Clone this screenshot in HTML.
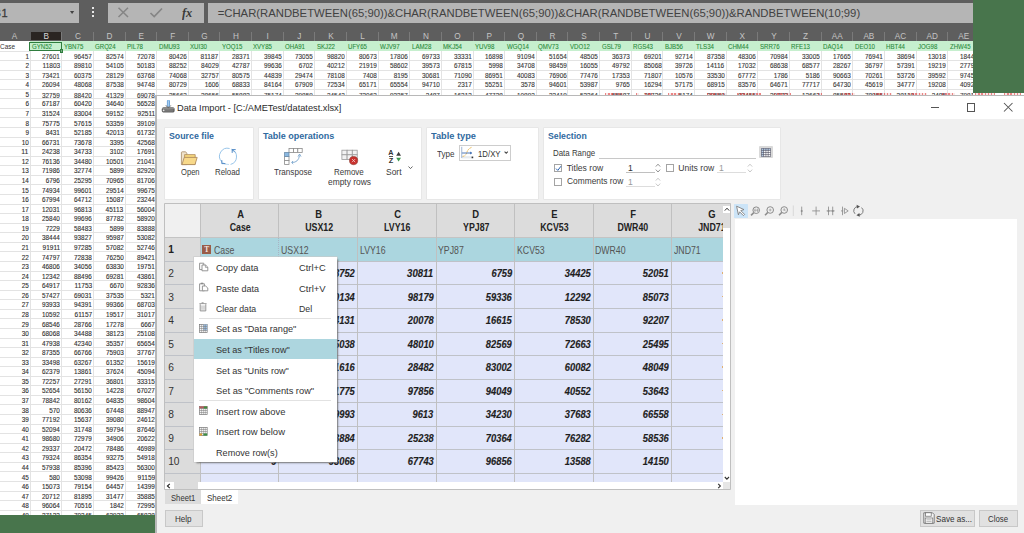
<!DOCTYPE html><html><head><meta charset='utf-8'><style>*{margin:0;padding:0}
html,body{width:1024px;height:533px;overflow:hidden;background:#fff}
body{position:relative;font-family:'Liberation Sans',sans-serif}
body>div,body>span,body>svg{position:absolute}
.t{white-space:nowrap;line-height:0;display:block}
</style></head><body><div style='left:0.00px;top:0.00px;width:973.00px;height:41.40px;background:#5e5e5e;'></div>
<div style='left:0.00px;top:3.00px;width:79.40px;height:20.00px;background:#b5b5b5;'></div>
<span class='t' style='top:13.49px;font-size:11px;color:#3a3a3a;left:1.50px;-webkit-text-stroke:0.3px #3a3a3a;'>1</span>
<span class='t' style='top:13.49px;font-size:11px;color:#3a3a3a;left:-6.34px;'>B</span>
<svg style='left:69.6px;top:11.2px' width='5' height='4'><path d='M0 0 L4.2 0 L2.1 3Z' fill='#444'/></svg>
<div style='left:92.00px;top:7.20px;width:2.20px;height:2.00px;background:#e8e8e8;'></div>
<div style='left:92.00px;top:10.90px;width:2.20px;height:2.00px;background:#e8e8e8;'></div>
<div style='left:92.00px;top:14.60px;width:2.20px;height:2.00px;background:#e8e8e8;'></div>
<div style='left:107.50px;top:2.90px;width:96.50px;height:20.00px;background:#b5b5b5;'></div>
<svg style='left:117px;top:7px' width='13' height='11'><path d='M1.5 0.8 L11 10 M11 0.8 L1.5 10' stroke='#858585' stroke-width='1.5' fill='none'/></svg>
<svg style='left:149px;top:7px' width='15' height='11'><path d='M1.5 6 L5.2 9.6 L13 1.5' stroke='#858585' stroke-width='1.7' fill='none'/></svg>
<span class='t' style='top:12.82px;font-size:11.5px;color:#3a3a3a;font-weight:bold;font-style:italic;left:182.30px;transform:scaleX(1.076);transform-origin:left;font-family:Liberation Serif,serif;'>fx</span>
<div style='left:207.50px;top:2.90px;width:765.50px;height:20.00px;background:#b5b5b5;'></div>
<span class='t' style='top:13.18px;font-size:11.3px;color:#424242;left:217.70px;'>=CHAR(RANDBETWEEN(65;90))&amp;CHAR(RANDBETWEEN(65;90))&amp;CHAR(RANDBETWEEN(65;90))&amp;RANDBETWEEN(10;99)</span>
<div style='left:30.90px;top:32.20px;width:30.00px;height:8.30px;background:#2a2522;'></div>
<div style='left:30.90px;top:40.50px;width:30.00px;height:0.90px;background:#8a8a8a;'></div>
<span class='t' style='top:37.16px;font-size:8.2px;color:#c4c4c4;left:11.87px;'>A</span>
<span class='t' style='top:37.16px;font-size:8.2px;color:#d8d8d8;left:43.49px;'>B</span>
<div style='left:61.24px;top:32.20px;width:1.00px;height:9.20px;background:#7a7a7a;'></div>
<span class='t' style='top:37.16px;font-size:8.2px;color:#c4c4c4;left:74.90px;'>C</span>
<div style='left:92.88px;top:32.20px;width:1.00px;height:9.20px;background:#7a7a7a;'></div>
<span class='t' style='top:37.16px;font-size:8.2px;color:#c4c4c4;left:106.54px;'>D</span>
<div style='left:124.52px;top:32.20px;width:1.00px;height:9.20px;background:#7a7a7a;'></div>
<span class='t' style='top:37.16px;font-size:8.2px;color:#c4c4c4;left:138.41px;'>E</span>
<div style='left:156.16px;top:32.20px;width:1.00px;height:9.20px;background:#7a7a7a;'></div>
<span class='t' style='top:37.16px;font-size:8.2px;color:#c4c4c4;left:170.28px;'>F</span>
<div style='left:187.80px;top:32.20px;width:1.00px;height:9.20px;background:#7a7a7a;'></div>
<span class='t' style='top:37.16px;font-size:8.2px;color:#c4c4c4;left:201.23px;'>G</span>
<div style='left:219.44px;top:32.20px;width:1.00px;height:9.20px;background:#7a7a7a;'></div>
<span class='t' style='top:37.16px;font-size:8.2px;color:#c4c4c4;left:233.10px;'>H</span>
<div style='left:251.08px;top:32.20px;width:1.00px;height:9.20px;background:#7a7a7a;'></div>
<span class='t' style='top:37.16px;font-size:8.2px;color:#c4c4c4;left:266.56px;'>I</span>
<div style='left:282.72px;top:32.20px;width:1.00px;height:9.20px;background:#7a7a7a;'></div>
<span class='t' style='top:37.16px;font-size:8.2px;color:#c4c4c4;left:297.29px;'>J</span>
<div style='left:314.36px;top:32.20px;width:1.00px;height:9.20px;background:#7a7a7a;'></div>
<span class='t' style='top:37.16px;font-size:8.2px;color:#c4c4c4;left:328.25px;'>K</span>
<div style='left:346.00px;top:32.20px;width:1.00px;height:9.20px;background:#7a7a7a;'></div>
<span class='t' style='top:37.16px;font-size:8.2px;color:#c4c4c4;left:360.34px;'>L</span>
<div style='left:377.64px;top:32.20px;width:1.00px;height:9.20px;background:#7a7a7a;'></div>
<span class='t' style='top:37.16px;font-size:8.2px;color:#c4c4c4;left:390.84px;'>M</span>
<div style='left:409.28px;top:32.20px;width:1.00px;height:9.20px;background:#7a7a7a;'></div>
<span class='t' style='top:37.16px;font-size:8.2px;color:#c4c4c4;left:422.94px;'>N</span>
<div style='left:440.92px;top:32.20px;width:1.00px;height:9.20px;background:#7a7a7a;'></div>
<span class='t' style='top:37.16px;font-size:8.2px;color:#c4c4c4;left:454.35px;'>O</span>
<div style='left:472.56px;top:32.20px;width:1.00px;height:9.20px;background:#7a7a7a;'></div>
<span class='t' style='top:37.16px;font-size:8.2px;color:#c4c4c4;left:486.45px;'>P</span>
<div style='left:504.20px;top:32.20px;width:1.00px;height:9.20px;background:#7a7a7a;'></div>
<span class='t' style='top:37.16px;font-size:8.2px;color:#c4c4c4;left:517.63px;'>Q</span>
<div style='left:535.84px;top:32.20px;width:1.00px;height:9.20px;background:#7a7a7a;'></div>
<span class='t' style='top:37.16px;font-size:8.2px;color:#c4c4c4;left:549.50px;'>R</span>
<div style='left:567.48px;top:32.20px;width:1.00px;height:9.20px;background:#7a7a7a;'></div>
<span class='t' style='top:37.16px;font-size:8.2px;color:#c4c4c4;left:581.37px;'>S</span>
<div style='left:599.12px;top:32.20px;width:1.00px;height:9.20px;background:#7a7a7a;'></div>
<span class='t' style='top:37.16px;font-size:8.2px;color:#c4c4c4;left:613.24px;'>T</span>
<div style='left:630.76px;top:32.20px;width:1.00px;height:9.20px;background:#7a7a7a;'></div>
<span class='t' style='top:37.16px;font-size:8.2px;color:#c4c4c4;left:644.42px;'>U</span>
<div style='left:662.40px;top:32.20px;width:1.00px;height:9.20px;background:#7a7a7a;'></div>
<span class='t' style='top:37.16px;font-size:8.2px;color:#c4c4c4;left:676.29px;'>V</span>
<div style='left:694.04px;top:32.20px;width:1.00px;height:9.20px;background:#7a7a7a;'></div>
<span class='t' style='top:37.16px;font-size:8.2px;color:#c4c4c4;left:706.79px;'>W</span>
<div style='left:725.68px;top:32.20px;width:1.00px;height:9.20px;background:#7a7a7a;'></div>
<span class='t' style='top:37.16px;font-size:8.2px;color:#c4c4c4;left:739.57px;'>X</span>
<div style='left:757.32px;top:32.20px;width:1.00px;height:9.20px;background:#7a7a7a;'></div>
<span class='t' style='top:37.16px;font-size:8.2px;color:#c4c4c4;left:771.21px;'>Y</span>
<div style='left:788.96px;top:32.20px;width:1.00px;height:9.20px;background:#7a7a7a;'></div>
<span class='t' style='top:37.16px;font-size:8.2px;color:#c4c4c4;left:803.08px;'>Z</span>
<div style='left:820.60px;top:32.20px;width:1.00px;height:9.20px;background:#7a7a7a;'></div>
<span class='t' style='top:37.16px;font-size:8.2px;color:#c4c4c4;left:831.75px;'>AA</span>
<div style='left:852.24px;top:32.20px;width:1.00px;height:9.20px;background:#7a7a7a;'></div>
<span class='t' style='top:37.16px;font-size:8.2px;color:#c4c4c4;left:863.39px;'>AB</span>
<div style='left:883.88px;top:32.20px;width:1.00px;height:9.20px;background:#7a7a7a;'></div>
<span class='t' style='top:37.16px;font-size:8.2px;color:#c4c4c4;left:894.80px;'>AC</span>
<div style='left:915.52px;top:32.20px;width:1.00px;height:9.20px;background:#7a7a7a;'></div>
<span class='t' style='top:37.16px;font-size:8.2px;color:#c4c4c4;left:926.44px;'>AD</span>
<div style='left:947.16px;top:32.20px;width:1.00px;height:9.20px;background:#7a7a7a;'></div>
<span class='t' style='top:37.16px;font-size:8.2px;color:#c4c4c4;left:958.31px;'>AE</span>
<div style='left:978.80px;top:32.20px;width:1.00px;height:9.20px;background:#7a7a7a;'></div>
<div style='left:0.00px;top:41.40px;width:973.00px;height:473.30px;background:#ffffff;'></div>
<div style='left:30.10px;top:41.40px;width:942.90px;height:9.60px;background:#c6efce;'></div>
<span class='t' style='top:46.81px;font-size:7.2px;color:#333;left:0.20px;transform:scaleX(0.892);transform-origin:left;'>Case</span>
<span class='t' style='top:46.84px;font-size:7.4px;color:#2a8a3a;left:32.00px;transform:scaleX(0.824);transform-origin:left;-webkit-text-stroke:0.1px #2a8a3a;'>GYN52</span>
<span class='t' style='top:46.84px;font-size:7.4px;color:#2a8a3a;left:63.64px;transform:scaleX(0.824);transform-origin:left;-webkit-text-stroke:0.1px #2a8a3a;'>YBN75</span>
<span class='t' style='top:46.84px;font-size:7.4px;color:#2a8a3a;left:95.28px;transform:scaleX(0.824);transform-origin:left;-webkit-text-stroke:0.1px #2a8a3a;'>GRQ24</span>
<span class='t' style='top:46.84px;font-size:7.4px;color:#2a8a3a;left:126.92px;transform:scaleX(0.824);transform-origin:left;-webkit-text-stroke:0.1px #2a8a3a;'>PIL78</span>
<span class='t' style='top:46.84px;font-size:7.4px;color:#2a8a3a;left:158.56px;transform:scaleX(0.824);transform-origin:left;-webkit-text-stroke:0.1px #2a8a3a;'>DMU93</span>
<span class='t' style='top:46.84px;font-size:7.4px;color:#2a8a3a;left:190.20px;transform:scaleX(0.824);transform-origin:left;-webkit-text-stroke:0.1px #2a8a3a;'>XUI30</span>
<span class='t' style='top:46.84px;font-size:7.4px;color:#2a8a3a;left:221.84px;transform:scaleX(0.824);transform-origin:left;-webkit-text-stroke:0.1px #2a8a3a;'>YOQ15</span>
<span class='t' style='top:46.84px;font-size:7.4px;color:#2a8a3a;left:253.48px;transform:scaleX(0.824);transform-origin:left;-webkit-text-stroke:0.1px #2a8a3a;'>XVY85</span>
<span class='t' style='top:46.84px;font-size:7.4px;color:#2a8a3a;left:285.12px;transform:scaleX(0.824);transform-origin:left;-webkit-text-stroke:0.1px #2a8a3a;'>OHA91</span>
<span class='t' style='top:46.84px;font-size:7.4px;color:#2a8a3a;left:316.76px;transform:scaleX(0.824);transform-origin:left;-webkit-text-stroke:0.1px #2a8a3a;'>SKJ22</span>
<span class='t' style='top:46.84px;font-size:7.4px;color:#2a8a3a;left:348.40px;transform:scaleX(0.824);transform-origin:left;-webkit-text-stroke:0.1px #2a8a3a;'>UFY65</span>
<span class='t' style='top:46.84px;font-size:7.4px;color:#2a8a3a;left:380.04px;transform:scaleX(0.824);transform-origin:left;-webkit-text-stroke:0.1px #2a8a3a;'>WJV97</span>
<span class='t' style='top:46.84px;font-size:7.4px;color:#2a8a3a;left:411.68px;transform:scaleX(0.824);transform-origin:left;-webkit-text-stroke:0.1px #2a8a3a;'>LAM28</span>
<span class='t' style='top:46.84px;font-size:7.4px;color:#2a8a3a;left:443.32px;transform:scaleX(0.824);transform-origin:left;-webkit-text-stroke:0.1px #2a8a3a;'>MKJ54</span>
<span class='t' style='top:46.84px;font-size:7.4px;color:#2a8a3a;left:474.96px;transform:scaleX(0.824);transform-origin:left;-webkit-text-stroke:0.1px #2a8a3a;'>YUV98</span>
<span class='t' style='top:46.84px;font-size:7.4px;color:#2a8a3a;left:506.60px;transform:scaleX(0.824);transform-origin:left;-webkit-text-stroke:0.1px #2a8a3a;'>WGQ14</span>
<span class='t' style='top:46.84px;font-size:7.4px;color:#2a8a3a;left:538.24px;transform:scaleX(0.824);transform-origin:left;-webkit-text-stroke:0.1px #2a8a3a;'>QMV73</span>
<span class='t' style='top:46.84px;font-size:7.4px;color:#2a8a3a;left:569.88px;transform:scaleX(0.824);transform-origin:left;-webkit-text-stroke:0.1px #2a8a3a;'>VDO12</span>
<span class='t' style='top:46.84px;font-size:7.4px;color:#2a8a3a;left:601.52px;transform:scaleX(0.824);transform-origin:left;-webkit-text-stroke:0.1px #2a8a3a;'>GSL79</span>
<span class='t' style='top:46.84px;font-size:7.4px;color:#2a8a3a;left:633.16px;transform:scaleX(0.824);transform-origin:left;-webkit-text-stroke:0.1px #2a8a3a;'>RGS43</span>
<span class='t' style='top:46.84px;font-size:7.4px;color:#2a8a3a;left:664.80px;transform:scaleX(0.824);transform-origin:left;-webkit-text-stroke:0.1px #2a8a3a;'>BJB56</span>
<span class='t' style='top:46.84px;font-size:7.4px;color:#2a8a3a;left:696.44px;transform:scaleX(0.824);transform-origin:left;-webkit-text-stroke:0.1px #2a8a3a;'>TLS34</span>
<span class='t' style='top:46.84px;font-size:7.4px;color:#2a8a3a;left:728.08px;transform:scaleX(0.824);transform-origin:left;-webkit-text-stroke:0.1px #2a8a3a;'>CHM44</span>
<span class='t' style='top:46.84px;font-size:7.4px;color:#2a8a3a;left:759.72px;transform:scaleX(0.824);transform-origin:left;-webkit-text-stroke:0.1px #2a8a3a;'>SRR76</span>
<span class='t' style='top:46.84px;font-size:7.4px;color:#2a8a3a;left:791.36px;transform:scaleX(0.824);transform-origin:left;-webkit-text-stroke:0.1px #2a8a3a;'>RFE13</span>
<span class='t' style='top:46.84px;font-size:7.4px;color:#2a8a3a;left:823.00px;transform:scaleX(0.824);transform-origin:left;-webkit-text-stroke:0.1px #2a8a3a;'>DAQ14</span>
<span class='t' style='top:46.84px;font-size:7.4px;color:#2a8a3a;left:854.64px;transform:scaleX(0.824);transform-origin:left;-webkit-text-stroke:0.1px #2a8a3a;'>DEO10</span>
<span class='t' style='top:46.84px;font-size:7.4px;color:#2a8a3a;left:886.28px;transform:scaleX(0.824);transform-origin:left;-webkit-text-stroke:0.1px #2a8a3a;'>HBT44</span>
<span class='t' style='top:46.84px;font-size:7.4px;color:#2a8a3a;left:917.92px;transform:scaleX(0.824);transform-origin:left;-webkit-text-stroke:0.1px #2a8a3a;'>JOG98</span>
<span class='t' style='top:46.84px;font-size:7.4px;color:#2a8a3a;left:949.56px;transform:scaleX(0.824);transform-origin:left;-webkit-text-stroke:0.1px #2a8a3a;'>ZHW45</span>
<div style='left:0.00px;top:60.07px;width:973.00px;height:1.00px;background:#e3e3e3;'></div>
<div style='left:0.00px;top:69.63px;width:973.00px;height:1.00px;background:#e3e3e3;'></div>
<div style='left:0.00px;top:79.20px;width:973.00px;height:1.00px;background:#e3e3e3;'></div>
<div style='left:0.00px;top:88.77px;width:973.00px;height:1.00px;background:#e3e3e3;'></div>
<div style='left:0.00px;top:98.34px;width:155.00px;height:1.00px;background:#e3e3e3;'></div>
<div style='left:0.00px;top:107.90px;width:155.00px;height:1.00px;background:#e3e3e3;'></div>
<div style='left:0.00px;top:117.47px;width:155.00px;height:1.00px;background:#e3e3e3;'></div>
<div style='left:0.00px;top:127.04px;width:155.00px;height:1.00px;background:#e3e3e3;'></div>
<div style='left:0.00px;top:136.60px;width:155.00px;height:1.00px;background:#e3e3e3;'></div>
<div style='left:0.00px;top:146.17px;width:155.00px;height:1.00px;background:#e3e3e3;'></div>
<div style='left:0.00px;top:155.74px;width:155.00px;height:1.00px;background:#e3e3e3;'></div>
<div style='left:0.00px;top:165.30px;width:155.00px;height:1.00px;background:#e3e3e3;'></div>
<div style='left:0.00px;top:174.87px;width:155.00px;height:1.00px;background:#e3e3e3;'></div>
<div style='left:0.00px;top:184.44px;width:155.00px;height:1.00px;background:#e3e3e3;'></div>
<div style='left:0.00px;top:194.00px;width:155.00px;height:1.00px;background:#e3e3e3;'></div>
<div style='left:0.00px;top:203.57px;width:155.00px;height:1.00px;background:#e3e3e3;'></div>
<div style='left:0.00px;top:213.14px;width:155.00px;height:1.00px;background:#e3e3e3;'></div>
<div style='left:0.00px;top:222.71px;width:155.00px;height:1.00px;background:#e3e3e3;'></div>
<div style='left:0.00px;top:232.27px;width:155.00px;height:1.00px;background:#e3e3e3;'></div>
<div style='left:0.00px;top:241.84px;width:155.00px;height:1.00px;background:#e3e3e3;'></div>
<div style='left:0.00px;top:251.41px;width:155.00px;height:1.00px;background:#e3e3e3;'></div>
<div style='left:0.00px;top:260.97px;width:155.00px;height:1.00px;background:#e3e3e3;'></div>
<div style='left:0.00px;top:270.54px;width:155.00px;height:1.00px;background:#e3e3e3;'></div>
<div style='left:0.00px;top:280.11px;width:155.00px;height:1.00px;background:#e3e3e3;'></div>
<div style='left:0.00px;top:289.68px;width:155.00px;height:1.00px;background:#e3e3e3;'></div>
<div style='left:0.00px;top:299.24px;width:155.00px;height:1.00px;background:#e3e3e3;'></div>
<div style='left:0.00px;top:308.81px;width:155.00px;height:1.00px;background:#e3e3e3;'></div>
<div style='left:0.00px;top:318.38px;width:155.00px;height:1.00px;background:#e3e3e3;'></div>
<div style='left:0.00px;top:327.94px;width:155.00px;height:1.00px;background:#e3e3e3;'></div>
<div style='left:0.00px;top:337.51px;width:155.00px;height:1.00px;background:#e3e3e3;'></div>
<div style='left:0.00px;top:347.08px;width:155.00px;height:1.00px;background:#e3e3e3;'></div>
<div style='left:0.00px;top:356.64px;width:155.00px;height:1.00px;background:#e3e3e3;'></div>
<div style='left:0.00px;top:366.21px;width:155.00px;height:1.00px;background:#e3e3e3;'></div>
<div style='left:0.00px;top:375.78px;width:155.00px;height:1.00px;background:#e3e3e3;'></div>
<div style='left:0.00px;top:385.35px;width:155.00px;height:1.00px;background:#e3e3e3;'></div>
<div style='left:0.00px;top:394.91px;width:155.00px;height:1.00px;background:#e3e3e3;'></div>
<div style='left:0.00px;top:404.48px;width:155.00px;height:1.00px;background:#e3e3e3;'></div>
<div style='left:0.00px;top:414.05px;width:155.00px;height:1.00px;background:#e3e3e3;'></div>
<div style='left:0.00px;top:423.61px;width:155.00px;height:1.00px;background:#e3e3e3;'></div>
<div style='left:0.00px;top:433.18px;width:155.00px;height:1.00px;background:#e3e3e3;'></div>
<div style='left:0.00px;top:442.75px;width:155.00px;height:1.00px;background:#e3e3e3;'></div>
<div style='left:0.00px;top:452.31px;width:155.00px;height:1.00px;background:#e3e3e3;'></div>
<div style='left:0.00px;top:461.88px;width:155.00px;height:1.00px;background:#e3e3e3;'></div>
<div style='left:0.00px;top:471.45px;width:155.00px;height:1.00px;background:#e3e3e3;'></div>
<div style='left:0.00px;top:481.01px;width:155.00px;height:1.00px;background:#e3e3e3;'></div>
<div style='left:0.00px;top:490.58px;width:155.00px;height:1.00px;background:#e3e3e3;'></div>
<div style='left:0.00px;top:500.15px;width:155.00px;height:1.00px;background:#e3e3e3;'></div>
<div style='left:0.00px;top:509.72px;width:155.00px;height:1.00px;background:#e3e3e3;'></div>
<div style='left:0.00px;top:50.50px;width:30.10px;height:1.00px;background:#e3e3e3;'></div>
<div style='left:29.60px;top:51.00px;width:1.00px;height:463.70px;background:#e3e3e3;'></div>
<div style='left:61.24px;top:51.00px;width:1.00px;height:463.70px;background:#e3e3e3;'></div>
<div style='left:92.88px;top:51.00px;width:1.00px;height:463.70px;background:#e3e3e3;'></div>
<div style='left:124.52px;top:51.00px;width:1.00px;height:463.70px;background:#e3e3e3;'></div>
<div style='left:156.16px;top:51.00px;width:1.00px;height:463.70px;background:#e3e3e3;'></div>
<div style='left:187.80px;top:51.00px;width:1.00px;height:463.70px;background:#e3e3e3;'></div>
<div style='left:219.44px;top:51.00px;width:1.00px;height:463.70px;background:#e3e3e3;'></div>
<div style='left:251.08px;top:51.00px;width:1.00px;height:463.70px;background:#e3e3e3;'></div>
<div style='left:282.72px;top:51.00px;width:1.00px;height:463.70px;background:#e3e3e3;'></div>
<div style='left:314.36px;top:51.00px;width:1.00px;height:463.70px;background:#e3e3e3;'></div>
<div style='left:346.00px;top:51.00px;width:1.00px;height:463.70px;background:#e3e3e3;'></div>
<div style='left:377.64px;top:51.00px;width:1.00px;height:463.70px;background:#e3e3e3;'></div>
<div style='left:409.28px;top:51.00px;width:1.00px;height:463.70px;background:#e3e3e3;'></div>
<div style='left:440.92px;top:51.00px;width:1.00px;height:463.70px;background:#e3e3e3;'></div>
<div style='left:472.56px;top:51.00px;width:1.00px;height:463.70px;background:#e3e3e3;'></div>
<div style='left:504.20px;top:51.00px;width:1.00px;height:463.70px;background:#e3e3e3;'></div>
<div style='left:535.84px;top:51.00px;width:1.00px;height:463.70px;background:#e3e3e3;'></div>
<div style='left:567.48px;top:51.00px;width:1.00px;height:463.70px;background:#e3e3e3;'></div>
<div style='left:599.12px;top:51.00px;width:1.00px;height:463.70px;background:#e3e3e3;'></div>
<div style='left:630.76px;top:51.00px;width:1.00px;height:463.70px;background:#e3e3e3;'></div>
<div style='left:662.40px;top:51.00px;width:1.00px;height:463.70px;background:#e3e3e3;'></div>
<div style='left:694.04px;top:51.00px;width:1.00px;height:463.70px;background:#e3e3e3;'></div>
<div style='left:725.68px;top:51.00px;width:1.00px;height:463.70px;background:#e3e3e3;'></div>
<div style='left:757.32px;top:51.00px;width:1.00px;height:463.70px;background:#e3e3e3;'></div>
<div style='left:788.96px;top:51.00px;width:1.00px;height:463.70px;background:#e3e3e3;'></div>
<div style='left:820.60px;top:51.00px;width:1.00px;height:463.70px;background:#e3e3e3;'></div>
<div style='left:852.24px;top:51.00px;width:1.00px;height:463.70px;background:#e3e3e3;'></div>
<div style='left:883.88px;top:51.00px;width:1.00px;height:463.70px;background:#e3e3e3;'></div>
<div style='left:915.52px;top:51.00px;width:1.00px;height:463.70px;background:#e3e3e3;'></div>
<div style='left:947.16px;top:51.00px;width:1.00px;height:463.70px;background:#e3e3e3;'></div>
<span class='t' style='top:56.64px;font-size:7.1px;color:#303030;left:24.50px;transform:scaleX(0.897);transform-origin:right;-webkit-text-stroke:0.12px #303030;'>1</span>
<span class='t' style='top:56.64px;font-size:7.1px;color:#383838;left:40.35px;transform:scaleX(0.897);transform-origin:right;-webkit-text-stroke:0.12px #383838;'>27601</span>
<span class='t' style='top:56.64px;font-size:7.1px;color:#383838;left:71.99px;transform:scaleX(0.897);transform-origin:right;-webkit-text-stroke:0.12px #383838;'>96457</span>
<span class='t' style='top:56.64px;font-size:7.1px;color:#383838;left:103.63px;transform:scaleX(0.897);transform-origin:right;-webkit-text-stroke:0.12px #383838;'>82574</span>
<span class='t' style='top:56.64px;font-size:7.1px;color:#383838;left:135.27px;transform:scaleX(0.897);transform-origin:right;-webkit-text-stroke:0.12px #383838;'>72078</span>
<span class='t' style='top:56.64px;font-size:7.1px;color:#383838;left:166.91px;transform:scaleX(0.897);transform-origin:right;-webkit-text-stroke:0.12px #383838;'>80426</span>
<span class='t' style='top:56.64px;font-size:7.1px;color:#383838;left:199.08px;transform:scaleX(0.921);transform-origin:right;-webkit-text-stroke:0.12px #383838;'>81187</span>
<span class='t' style='top:56.64px;font-size:7.1px;color:#383838;left:230.19px;transform:scaleX(0.897);transform-origin:right;-webkit-text-stroke:0.12px #383838;'>28371</span>
<span class='t' style='top:56.64px;font-size:7.1px;color:#383838;left:261.83px;transform:scaleX(0.897);transform-origin:right;-webkit-text-stroke:0.12px #383838;'>39845</span>
<span class='t' style='top:56.64px;font-size:7.1px;color:#383838;left:293.47px;transform:scaleX(0.897);transform-origin:right;-webkit-text-stroke:0.12px #383838;'>73055</span>
<span class='t' style='top:56.64px;font-size:7.1px;color:#383838;left:325.11px;transform:scaleX(0.897);transform-origin:right;-webkit-text-stroke:0.12px #383838;'>98820</span>
<span class='t' style='top:56.64px;font-size:7.1px;color:#383838;left:356.75px;transform:scaleX(0.897);transform-origin:right;-webkit-text-stroke:0.12px #383838;'>80673</span>
<span class='t' style='top:56.64px;font-size:7.1px;color:#383838;left:388.39px;transform:scaleX(0.897);transform-origin:right;-webkit-text-stroke:0.12px #383838;'>17806</span>
<span class='t' style='top:56.64px;font-size:7.1px;color:#383838;left:420.03px;transform:scaleX(0.897);transform-origin:right;-webkit-text-stroke:0.12px #383838;'>69733</span>
<span class='t' style='top:56.64px;font-size:7.1px;color:#383838;left:451.67px;transform:scaleX(0.897);transform-origin:right;-webkit-text-stroke:0.12px #383838;'>33331</span>
<span class='t' style='top:56.64px;font-size:7.1px;color:#383838;left:483.31px;transform:scaleX(0.897);transform-origin:right;-webkit-text-stroke:0.12px #383838;'>16898</span>
<span class='t' style='top:56.64px;font-size:7.1px;color:#383838;left:514.95px;transform:scaleX(0.897);transform-origin:right;-webkit-text-stroke:0.12px #383838;'>91094</span>
<span class='t' style='top:56.64px;font-size:7.1px;color:#383838;left:546.59px;transform:scaleX(0.897);transform-origin:right;-webkit-text-stroke:0.12px #383838;'>51654</span>
<span class='t' style='top:56.64px;font-size:7.1px;color:#383838;left:578.23px;transform:scaleX(0.897);transform-origin:right;-webkit-text-stroke:0.12px #383838;'>48505</span>
<span class='t' style='top:56.64px;font-size:7.1px;color:#383838;left:609.87px;transform:scaleX(0.897);transform-origin:right;-webkit-text-stroke:0.12px #383838;'>36373</span>
<span class='t' style='top:56.64px;font-size:7.1px;color:#383838;left:641.51px;transform:scaleX(0.897);transform-origin:right;-webkit-text-stroke:0.12px #383838;'>69201</span>
<span class='t' style='top:56.64px;font-size:7.1px;color:#383838;left:673.15px;transform:scaleX(0.897);transform-origin:right;-webkit-text-stroke:0.12px #383838;'>92714</span>
<span class='t' style='top:56.64px;font-size:7.1px;color:#383838;left:704.79px;transform:scaleX(0.897);transform-origin:right;-webkit-text-stroke:0.12px #383838;'>87358</span>
<span class='t' style='top:56.64px;font-size:7.1px;color:#383838;left:736.43px;transform:scaleX(0.897);transform-origin:right;-webkit-text-stroke:0.12px #383838;'>48306</span>
<span class='t' style='top:56.64px;font-size:7.1px;color:#383838;left:768.07px;transform:scaleX(0.897);transform-origin:right;-webkit-text-stroke:0.12px #383838;'>70984</span>
<span class='t' style='top:56.64px;font-size:7.1px;color:#383838;left:799.71px;transform:scaleX(0.897);transform-origin:right;-webkit-text-stroke:0.12px #383838;'>33005</span>
<span class='t' style='top:56.64px;font-size:7.1px;color:#383838;left:831.35px;transform:scaleX(0.897);transform-origin:right;-webkit-text-stroke:0.12px #383838;'>17665</span>
<span class='t' style='top:56.64px;font-size:7.1px;color:#383838;left:862.99px;transform:scaleX(0.897);transform-origin:right;-webkit-text-stroke:0.12px #383838;'>76941</span>
<span class='t' style='top:56.64px;font-size:7.1px;color:#383838;left:894.63px;transform:scaleX(0.897);transform-origin:right;-webkit-text-stroke:0.12px #383838;'>38694</span>
<span class='t' style='top:56.64px;font-size:7.1px;color:#383838;left:926.27px;transform:scaleX(0.897);transform-origin:right;-webkit-text-stroke:0.12px #383838;'>13018</span>
<span class='t' style='top:56.64px;font-size:7.1px;color:#383838;left:957.91px;transform:scaleX(0.897);transform-origin:right;-webkit-text-stroke:0.12px #383838;'>18442</span>
<span class='t' style='top:66.21px;font-size:7.1px;color:#303030;left:24.50px;transform:scaleX(0.897);transform-origin:right;-webkit-text-stroke:0.12px #303030;'>2</span>
<span class='t' style='top:66.21px;font-size:7.1px;color:#383838;left:40.88px;transform:scaleX(0.921);transform-origin:right;-webkit-text-stroke:0.12px #383838;'>11803</span>
<span class='t' style='top:66.21px;font-size:7.1px;color:#383838;left:71.99px;transform:scaleX(0.897);transform-origin:right;-webkit-text-stroke:0.12px #383838;'>89810</span>
<span class='t' style='top:66.21px;font-size:7.1px;color:#383838;left:103.63px;transform:scaleX(0.897);transform-origin:right;-webkit-text-stroke:0.12px #383838;'>54105</span>
<span class='t' style='top:66.21px;font-size:7.1px;color:#383838;left:135.27px;transform:scaleX(0.897);transform-origin:right;-webkit-text-stroke:0.12px #383838;'>50183</span>
<span class='t' style='top:66.21px;font-size:7.1px;color:#383838;left:166.91px;transform:scaleX(0.897);transform-origin:right;-webkit-text-stroke:0.12px #383838;'>88252</span>
<span class='t' style='top:66.21px;font-size:7.1px;color:#383838;left:198.55px;transform:scaleX(0.897);transform-origin:right;-webkit-text-stroke:0.12px #383838;'>84029</span>
<span class='t' style='top:66.21px;font-size:7.1px;color:#383838;left:230.19px;transform:scaleX(0.897);transform-origin:right;-webkit-text-stroke:0.12px #383838;'>42787</span>
<span class='t' style='top:66.21px;font-size:7.1px;color:#383838;left:261.83px;transform:scaleX(0.897);transform-origin:right;-webkit-text-stroke:0.12px #383838;'>99636</span>
<span class='t' style='top:66.21px;font-size:7.1px;color:#383838;left:297.42px;transform:scaleX(0.897);transform-origin:right;-webkit-text-stroke:0.12px #383838;'>6702</span>
<span class='t' style='top:66.21px;font-size:7.1px;color:#383838;left:325.11px;transform:scaleX(0.897);transform-origin:right;-webkit-text-stroke:0.12px #383838;'>40212</span>
<span class='t' style='top:66.21px;font-size:7.1px;color:#383838;left:356.75px;transform:scaleX(0.897);transform-origin:right;-webkit-text-stroke:0.12px #383838;'>21919</span>
<span class='t' style='top:66.21px;font-size:7.1px;color:#383838;left:388.39px;transform:scaleX(0.897);transform-origin:right;-webkit-text-stroke:0.12px #383838;'>58602</span>
<span class='t' style='top:66.21px;font-size:7.1px;color:#383838;left:420.03px;transform:scaleX(0.897);transform-origin:right;-webkit-text-stroke:0.12px #383838;'>39573</span>
<span class='t' style='top:66.21px;font-size:7.1px;color:#383838;left:451.67px;transform:scaleX(0.897);transform-origin:right;-webkit-text-stroke:0.12px #383838;'>67815</span>
<span class='t' style='top:66.21px;font-size:7.1px;color:#383838;left:487.26px;transform:scaleX(0.897);transform-origin:right;-webkit-text-stroke:0.12px #383838;'>5998</span>
<span class='t' style='top:66.21px;font-size:7.1px;color:#383838;left:514.95px;transform:scaleX(0.897);transform-origin:right;-webkit-text-stroke:0.12px #383838;'>34708</span>
<span class='t' style='top:66.21px;font-size:7.1px;color:#383838;left:546.59px;transform:scaleX(0.897);transform-origin:right;-webkit-text-stroke:0.12px #383838;'>98459</span>
<span class='t' style='top:66.21px;font-size:7.1px;color:#383838;left:578.23px;transform:scaleX(0.897);transform-origin:right;-webkit-text-stroke:0.12px #383838;'>16055</span>
<span class='t' style='top:66.21px;font-size:7.1px;color:#383838;left:609.87px;transform:scaleX(0.897);transform-origin:right;-webkit-text-stroke:0.12px #383838;'>49792</span>
<span class='t' style='top:66.21px;font-size:7.1px;color:#383838;left:641.51px;transform:scaleX(0.897);transform-origin:right;-webkit-text-stroke:0.12px #383838;'>85068</span>
<span class='t' style='top:66.21px;font-size:7.1px;color:#383838;left:673.15px;transform:scaleX(0.897);transform-origin:right;-webkit-text-stroke:0.12px #383838;'>39726</span>
<span class='t' style='top:66.21px;font-size:7.1px;color:#383838;left:705.32px;transform:scaleX(0.921);transform-origin:right;-webkit-text-stroke:0.12px #383838;'>14116</span>
<span class='t' style='top:66.21px;font-size:7.1px;color:#383838;left:736.43px;transform:scaleX(0.897);transform-origin:right;-webkit-text-stroke:0.12px #383838;'>17032</span>
<span class='t' style='top:66.21px;font-size:7.1px;color:#383838;left:768.07px;transform:scaleX(0.897);transform-origin:right;-webkit-text-stroke:0.12px #383838;'>68638</span>
<span class='t' style='top:66.21px;font-size:7.1px;color:#383838;left:799.71px;transform:scaleX(0.897);transform-origin:right;-webkit-text-stroke:0.12px #383838;'>68577</span>
<span class='t' style='top:66.21px;font-size:7.1px;color:#383838;left:831.35px;transform:scaleX(0.897);transform-origin:right;-webkit-text-stroke:0.12px #383838;'>28267</span>
<span class='t' style='top:66.21px;font-size:7.1px;color:#383838;left:862.99px;transform:scaleX(0.897);transform-origin:right;-webkit-text-stroke:0.12px #383838;'>36797</span>
<span class='t' style='top:66.21px;font-size:7.1px;color:#383838;left:894.63px;transform:scaleX(0.897);transform-origin:right;-webkit-text-stroke:0.12px #383838;'>57391</span>
<span class='t' style='top:66.21px;font-size:7.1px;color:#383838;left:926.27px;transform:scaleX(0.897);transform-origin:right;-webkit-text-stroke:0.12px #383838;'>19219</span>
<span class='t' style='top:66.21px;font-size:7.1px;color:#383838;left:957.91px;transform:scaleX(0.897);transform-origin:right;-webkit-text-stroke:0.12px #383838;'>27791</span>
<span class='t' style='top:75.77px;font-size:7.1px;color:#303030;left:24.50px;transform:scaleX(0.897);transform-origin:right;-webkit-text-stroke:0.12px #303030;'>3</span>
<span class='t' style='top:75.77px;font-size:7.1px;color:#383838;left:40.35px;transform:scaleX(0.897);transform-origin:right;-webkit-text-stroke:0.12px #383838;'>73421</span>
<span class='t' style='top:75.77px;font-size:7.1px;color:#383838;left:71.99px;transform:scaleX(0.897);transform-origin:right;-webkit-text-stroke:0.12px #383838;'>60375</span>
<span class='t' style='top:75.77px;font-size:7.1px;color:#383838;left:103.63px;transform:scaleX(0.897);transform-origin:right;-webkit-text-stroke:0.12px #383838;'>28129</span>
<span class='t' style='top:75.77px;font-size:7.1px;color:#383838;left:135.27px;transform:scaleX(0.897);transform-origin:right;-webkit-text-stroke:0.12px #383838;'>63768</span>
<span class='t' style='top:75.77px;font-size:7.1px;color:#383838;left:166.91px;transform:scaleX(0.897);transform-origin:right;-webkit-text-stroke:0.12px #383838;'>74068</span>
<span class='t' style='top:75.77px;font-size:7.1px;color:#383838;left:198.55px;transform:scaleX(0.897);transform-origin:right;-webkit-text-stroke:0.12px #383838;'>32757</span>
<span class='t' style='top:75.77px;font-size:7.1px;color:#383838;left:230.19px;transform:scaleX(0.897);transform-origin:right;-webkit-text-stroke:0.12px #383838;'>80575</span>
<span class='t' style='top:75.77px;font-size:7.1px;color:#383838;left:261.83px;transform:scaleX(0.897);transform-origin:right;-webkit-text-stroke:0.12px #383838;'>44839</span>
<span class='t' style='top:75.77px;font-size:7.1px;color:#383838;left:293.47px;transform:scaleX(0.897);transform-origin:right;-webkit-text-stroke:0.12px #383838;'>29474</span>
<span class='t' style='top:75.77px;font-size:7.1px;color:#383838;left:325.11px;transform:scaleX(0.897);transform-origin:right;-webkit-text-stroke:0.12px #383838;'>78108</span>
<span class='t' style='top:75.77px;font-size:7.1px;color:#383838;left:360.70px;transform:scaleX(0.897);transform-origin:right;-webkit-text-stroke:0.12px #383838;'>7408</span>
<span class='t' style='top:75.77px;font-size:7.1px;color:#383838;left:392.34px;transform:scaleX(0.897);transform-origin:right;-webkit-text-stroke:0.12px #383838;'>8195</span>
<span class='t' style='top:75.77px;font-size:7.1px;color:#383838;left:420.03px;transform:scaleX(0.897);transform-origin:right;-webkit-text-stroke:0.12px #383838;'>30681</span>
<span class='t' style='top:75.77px;font-size:7.1px;color:#383838;left:451.67px;transform:scaleX(0.897);transform-origin:right;-webkit-text-stroke:0.12px #383838;'>71090</span>
<span class='t' style='top:75.77px;font-size:7.1px;color:#383838;left:483.31px;transform:scaleX(0.897);transform-origin:right;-webkit-text-stroke:0.12px #383838;'>86951</span>
<span class='t' style='top:75.77px;font-size:7.1px;color:#383838;left:514.95px;transform:scaleX(0.897);transform-origin:right;-webkit-text-stroke:0.12px #383838;'>40083</span>
<span class='t' style='top:75.77px;font-size:7.1px;color:#383838;left:546.59px;transform:scaleX(0.897);transform-origin:right;-webkit-text-stroke:0.12px #383838;'>76906</span>
<span class='t' style='top:75.77px;font-size:7.1px;color:#383838;left:578.23px;transform:scaleX(0.897);transform-origin:right;-webkit-text-stroke:0.12px #383838;'>77476</span>
<span class='t' style='top:75.77px;font-size:7.1px;color:#383838;left:609.87px;transform:scaleX(0.897);transform-origin:right;-webkit-text-stroke:0.12px #383838;'>17353</span>
<span class='t' style='top:75.77px;font-size:7.1px;color:#383838;left:641.51px;transform:scaleX(0.897);transform-origin:right;-webkit-text-stroke:0.12px #383838;'>71807</span>
<span class='t' style='top:75.77px;font-size:7.1px;color:#383838;left:673.15px;transform:scaleX(0.897);transform-origin:right;-webkit-text-stroke:0.12px #383838;'>10576</span>
<span class='t' style='top:75.77px;font-size:7.1px;color:#383838;left:704.79px;transform:scaleX(0.897);transform-origin:right;-webkit-text-stroke:0.12px #383838;'>33530</span>
<span class='t' style='top:75.77px;font-size:7.1px;color:#383838;left:736.43px;transform:scaleX(0.897);transform-origin:right;-webkit-text-stroke:0.12px #383838;'>67772</span>
<span class='t' style='top:75.77px;font-size:7.1px;color:#383838;left:772.02px;transform:scaleX(0.897);transform-origin:right;-webkit-text-stroke:0.12px #383838;'>1786</span>
<span class='t' style='top:75.77px;font-size:7.1px;color:#383838;left:803.66px;transform:scaleX(0.897);transform-origin:right;-webkit-text-stroke:0.12px #383838;'>5186</span>
<span class='t' style='top:75.77px;font-size:7.1px;color:#383838;left:831.35px;transform:scaleX(0.897);transform-origin:right;-webkit-text-stroke:0.12px #383838;'>90663</span>
<span class='t' style='top:75.77px;font-size:7.1px;color:#383838;left:862.99px;transform:scaleX(0.897);transform-origin:right;-webkit-text-stroke:0.12px #383838;'>70261</span>
<span class='t' style='top:75.77px;font-size:7.1px;color:#383838;left:894.63px;transform:scaleX(0.897);transform-origin:right;-webkit-text-stroke:0.12px #383838;'>53726</span>
<span class='t' style='top:75.77px;font-size:7.1px;color:#383838;left:926.27px;transform:scaleX(0.897);transform-origin:right;-webkit-text-stroke:0.12px #383838;'>39592</span>
<span class='t' style='top:75.77px;font-size:7.1px;color:#383838;left:957.91px;transform:scaleX(0.897);transform-origin:right;-webkit-text-stroke:0.12px #383838;'>97451</span>
<span class='t' style='top:85.34px;font-size:7.1px;color:#303030;left:24.50px;transform:scaleX(0.897);transform-origin:right;-webkit-text-stroke:0.12px #303030;'>4</span>
<span class='t' style='top:85.34px;font-size:7.1px;color:#383838;left:40.35px;transform:scaleX(0.897);transform-origin:right;-webkit-text-stroke:0.12px #383838;'>26094</span>
<span class='t' style='top:85.34px;font-size:7.1px;color:#383838;left:71.99px;transform:scaleX(0.897);transform-origin:right;-webkit-text-stroke:0.12px #383838;'>48068</span>
<span class='t' style='top:85.34px;font-size:7.1px;color:#383838;left:103.63px;transform:scaleX(0.897);transform-origin:right;-webkit-text-stroke:0.12px #383838;'>87538</span>
<span class='t' style='top:85.34px;font-size:7.1px;color:#383838;left:135.27px;transform:scaleX(0.897);transform-origin:right;-webkit-text-stroke:0.12px #383838;'>94748</span>
<span class='t' style='top:85.34px;font-size:7.1px;color:#383838;left:166.91px;transform:scaleX(0.897);transform-origin:right;-webkit-text-stroke:0.12px #383838;'>80729</span>
<span class='t' style='top:85.34px;font-size:7.1px;color:#383838;left:202.50px;transform:scaleX(0.897);transform-origin:right;-webkit-text-stroke:0.12px #383838;'>1606</span>
<span class='t' style='top:85.34px;font-size:7.1px;color:#383838;left:230.19px;transform:scaleX(0.897);transform-origin:right;-webkit-text-stroke:0.12px #383838;'>68833</span>
<span class='t' style='top:85.34px;font-size:7.1px;color:#383838;left:261.83px;transform:scaleX(0.897);transform-origin:right;-webkit-text-stroke:0.12px #383838;'>84164</span>
<span class='t' style='top:85.34px;font-size:7.1px;color:#383838;left:293.47px;transform:scaleX(0.897);transform-origin:right;-webkit-text-stroke:0.12px #383838;'>67909</span>
<span class='t' style='top:85.34px;font-size:7.1px;color:#383838;left:325.11px;transform:scaleX(0.897);transform-origin:right;-webkit-text-stroke:0.12px #383838;'>72534</span>
<span class='t' style='top:85.34px;font-size:7.1px;color:#383838;left:356.75px;transform:scaleX(0.897);transform-origin:right;-webkit-text-stroke:0.12px #383838;'>65171</span>
<span class='t' style='top:85.34px;font-size:7.1px;color:#383838;left:388.39px;transform:scaleX(0.897);transform-origin:right;-webkit-text-stroke:0.12px #383838;'>65554</span>
<span class='t' style='top:85.34px;font-size:7.1px;color:#383838;left:420.03px;transform:scaleX(0.897);transform-origin:right;-webkit-text-stroke:0.12px #383838;'>94710</span>
<span class='t' style='top:85.34px;font-size:7.1px;color:#383838;left:455.62px;transform:scaleX(0.897);transform-origin:right;-webkit-text-stroke:0.12px #383838;'>2317</span>
<span class='t' style='top:85.34px;font-size:7.1px;color:#383838;left:483.31px;transform:scaleX(0.897);transform-origin:right;-webkit-text-stroke:0.12px #383838;'>55251</span>
<span class='t' style='top:85.34px;font-size:7.1px;color:#383838;left:518.90px;transform:scaleX(0.897);transform-origin:right;-webkit-text-stroke:0.12px #383838;'>3578</span>
<span class='t' style='top:85.34px;font-size:7.1px;color:#383838;left:546.59px;transform:scaleX(0.897);transform-origin:right;-webkit-text-stroke:0.12px #383838;'>94601</span>
<span class='t' style='top:85.34px;font-size:7.1px;color:#383838;left:578.23px;transform:scaleX(0.897);transform-origin:right;-webkit-text-stroke:0.12px #383838;'>53987</span>
<span class='t' style='top:85.34px;font-size:7.1px;color:#383838;left:613.82px;transform:scaleX(0.897);transform-origin:right;-webkit-text-stroke:0.12px #383838;'>9765</span>
<span class='t' style='top:85.34px;font-size:7.1px;color:#383838;left:641.51px;transform:scaleX(0.897);transform-origin:right;-webkit-text-stroke:0.12px #383838;'>16294</span>
<span class='t' style='top:85.34px;font-size:7.1px;color:#383838;left:673.15px;transform:scaleX(0.897);transform-origin:right;-webkit-text-stroke:0.12px #383838;'>57175</span>
<span class='t' style='top:85.34px;font-size:7.1px;color:#383838;left:704.79px;transform:scaleX(0.897);transform-origin:right;-webkit-text-stroke:0.12px #383838;'>68915</span>
<span class='t' style='top:85.34px;font-size:7.1px;color:#383838;left:736.43px;transform:scaleX(0.897);transform-origin:right;-webkit-text-stroke:0.12px #383838;'>83576</span>
<span class='t' style='top:85.34px;font-size:7.1px;color:#383838;left:768.07px;transform:scaleX(0.897);transform-origin:right;-webkit-text-stroke:0.12px #383838;'>64671</span>
<span class='t' style='top:85.34px;font-size:7.1px;color:#383838;left:799.71px;transform:scaleX(0.897);transform-origin:right;-webkit-text-stroke:0.12px #383838;'>77717</span>
<span class='t' style='top:85.34px;font-size:7.1px;color:#383838;left:831.35px;transform:scaleX(0.897);transform-origin:right;-webkit-text-stroke:0.12px #383838;'>64730</span>
<span class='t' style='top:85.34px;font-size:7.1px;color:#383838;left:862.99px;transform:scaleX(0.897);transform-origin:right;-webkit-text-stroke:0.12px #383838;'>45619</span>
<span class='t' style='top:85.34px;font-size:7.1px;color:#383838;left:894.63px;transform:scaleX(0.897);transform-origin:right;-webkit-text-stroke:0.12px #383838;'>34777</span>
<span class='t' style='top:85.34px;font-size:7.1px;color:#383838;left:926.27px;transform:scaleX(0.897);transform-origin:right;-webkit-text-stroke:0.12px #383838;'>19208</span>
<span class='t' style='top:85.34px;font-size:7.1px;color:#383838;left:957.91px;transform:scaleX(0.897);transform-origin:right;-webkit-text-stroke:0.12px #383838;'>40921</span>
<span class='t' style='top:94.91px;font-size:7.1px;color:#303030;left:24.50px;transform:scaleX(0.897);transform-origin:right;-webkit-text-stroke:0.12px #303030;'>5</span>
<span class='t' style='top:95.81px;font-size:7.1px;color:#383838;left:40.35px;transform:scaleX(0.897);transform-origin:right;-webkit-text-stroke:0.12px #383838;'>32759</span>
<span class='t' style='top:95.81px;font-size:7.1px;color:#383838;left:71.99px;transform:scaleX(0.897);transform-origin:right;-webkit-text-stroke:0.12px #383838;'>88420</span>
<span class='t' style='top:95.81px;font-size:7.1px;color:#383838;left:103.63px;transform:scaleX(0.897);transform-origin:right;-webkit-text-stroke:0.12px #383838;'>41329</span>
<span class='t' style='top:95.81px;font-size:7.1px;color:#383838;left:135.27px;transform:scaleX(0.897);transform-origin:right;-webkit-text-stroke:0.12px #383838;'>69078</span>
<span class='t' style='top:95.81px;font-size:7.1px;color:#383838;left:166.91px;transform:scaleX(0.897);transform-origin:right;-webkit-text-stroke:0.12px #383838;'>35663</span>
<span class='t' style='top:95.81px;font-size:7.1px;color:#383838;left:198.55px;transform:scaleX(0.897);transform-origin:right;-webkit-text-stroke:0.12px #383838;'>38656</span>
<span class='t' style='top:95.81px;font-size:7.1px;color:#383838;left:230.19px;transform:scaleX(0.897);transform-origin:right;-webkit-text-stroke:0.12px #383838;'>55883</span>
<span class='t' style='top:95.81px;font-size:7.1px;color:#383838;left:261.83px;transform:scaleX(0.897);transform-origin:right;-webkit-text-stroke:0.12px #383838;'>75174</span>
<span class='t' style='top:95.81px;font-size:7.1px;color:#383838;left:293.47px;transform:scaleX(0.897);transform-origin:right;-webkit-text-stroke:0.12px #383838;'>29859</span>
<span class='t' style='top:95.81px;font-size:7.1px;color:#383838;left:325.11px;transform:scaleX(0.897);transform-origin:right;-webkit-text-stroke:0.12px #383838;'>24542</span>
<span class='t' style='top:95.81px;font-size:7.1px;color:#383838;left:356.75px;transform:scaleX(0.897);transform-origin:right;-webkit-text-stroke:0.12px #383838;'>73063</span>
<span class='t' style='top:95.81px;font-size:7.1px;color:#383838;left:388.39px;transform:scaleX(0.897);transform-origin:right;-webkit-text-stroke:0.12px #383838;'>93357</span>
<span class='t' style='top:95.81px;font-size:7.1px;color:#383838;left:423.98px;transform:scaleX(0.897);transform-origin:right;-webkit-text-stroke:0.12px #383838;'>3487</span>
<span class='t' style='top:95.81px;font-size:7.1px;color:#383838;left:451.67px;transform:scaleX(0.897);transform-origin:right;-webkit-text-stroke:0.12px #383838;'>16313</span>
<span class='t' style='top:95.81px;font-size:7.1px;color:#383838;left:483.31px;transform:scaleX(0.897);transform-origin:right;-webkit-text-stroke:0.12px #383838;'>47738</span>
<span class='t' style='top:95.81px;font-size:7.1px;color:#383838;left:514.95px;transform:scaleX(0.897);transform-origin:right;-webkit-text-stroke:0.12px #383838;'>10892</span>
<span class='t' style='top:95.81px;font-size:7.1px;color:#383838;left:546.59px;transform:scaleX(0.897);transform-origin:right;-webkit-text-stroke:0.12px #383838;'>33419</span>
<span class='t' style='top:95.81px;font-size:7.1px;color:#383838;left:578.23px;transform:scaleX(0.897);transform-origin:right;-webkit-text-stroke:0.12px #383838;'>53264</span>
<span class='t' style='top:95.81px;font-size:7.1px;color:#383838;left:609.87px;transform:scaleX(0.897);transform-origin:right;-webkit-text-stroke:0.12px #383838;'>55587</span>
<span class='t' style='top:95.81px;font-size:7.1px;color:#383838;left:641.51px;transform:scaleX(0.897);transform-origin:right;-webkit-text-stroke:0.12px #383838;'>28726</span>
<span class='t' style='top:95.81px;font-size:7.1px;color:#383838;left:677.10px;transform:scaleX(0.897);transform-origin:right;-webkit-text-stroke:0.12px #383838;'>5174</span>
<span class='t' style='top:95.81px;font-size:7.1px;color:#383838;left:704.79px;transform:scaleX(0.897);transform-origin:right;-webkit-text-stroke:0.12px #383838;'>39559</span>
<span class='t' style='top:95.81px;font-size:7.1px;color:#383838;left:736.43px;transform:scaleX(0.897);transform-origin:right;-webkit-text-stroke:0.12px #383838;'>82455</span>
<span class='t' style='top:95.81px;font-size:7.1px;color:#383838;left:768.07px;transform:scaleX(0.897);transform-origin:right;-webkit-text-stroke:0.12px #383838;'>39772</span>
<span class='t' style='top:95.81px;font-size:7.1px;color:#383838;left:799.71px;transform:scaleX(0.897);transform-origin:right;-webkit-text-stroke:0.12px #383838;'>12662</span>
<span class='t' style='top:95.81px;font-size:7.1px;color:#383838;left:831.35px;transform:scaleX(0.897);transform-origin:right;-webkit-text-stroke:0.12px #383838;'>85582</span>
<span class='t' style='top:95.81px;font-size:7.1px;color:#383838;left:862.99px;transform:scaleX(0.897);transform-origin:right;-webkit-text-stroke:0.12px #383838;'>78855</span>
<span class='t' style='top:95.81px;font-size:7.1px;color:#383838;left:895.16px;transform:scaleX(0.921);transform-origin:right;-webkit-text-stroke:0.12px #383838;'>38119</span>
<span class='t' style='top:95.81px;font-size:7.1px;color:#383838;left:930.22px;transform:scaleX(0.897);transform-origin:right;-webkit-text-stroke:0.12px #383838;'>3485</span>
<span class='t' style='top:95.81px;font-size:7.1px;color:#383838;left:957.91px;transform:scaleX(0.897);transform-origin:right;-webkit-text-stroke:0.12px #383838;'>79815</span>
<span class='t' style='top:104.47px;font-size:7.1px;color:#303030;left:24.50px;transform:scaleX(0.897);transform-origin:right;-webkit-text-stroke:0.12px #303030;'>6</span>
<span class='t' style='top:104.47px;font-size:7.1px;color:#303030;left:40.35px;transform:scaleX(0.897);transform-origin:right;-webkit-text-stroke:0.12px #303030;'>67187</span>
<span class='t' style='top:104.47px;font-size:7.1px;color:#303030;left:71.99px;transform:scaleX(0.897);transform-origin:right;-webkit-text-stroke:0.12px #303030;'>60420</span>
<span class='t' style='top:104.47px;font-size:7.1px;color:#303030;left:103.63px;transform:scaleX(0.897);transform-origin:right;-webkit-text-stroke:0.12px #303030;'>34640</span>
<span class='t' style='top:104.47px;font-size:7.1px;color:#303030;left:135.27px;transform:scaleX(0.897);transform-origin:right;-webkit-text-stroke:0.12px #303030;'>56528</span>
<span class='t' style='top:114.04px;font-size:7.1px;color:#303030;left:24.50px;transform:scaleX(0.897);transform-origin:right;-webkit-text-stroke:0.12px #303030;'>7</span>
<span class='t' style='top:114.04px;font-size:7.1px;color:#303030;left:40.35px;transform:scaleX(0.897);transform-origin:right;-webkit-text-stroke:0.12px #303030;'>31524</span>
<span class='t' style='top:114.04px;font-size:7.1px;color:#303030;left:71.99px;transform:scaleX(0.897);transform-origin:right;-webkit-text-stroke:0.12px #303030;'>83004</span>
<span class='t' style='top:114.04px;font-size:7.1px;color:#303030;left:103.63px;transform:scaleX(0.897);transform-origin:right;-webkit-text-stroke:0.12px #303030;'>59152</span>
<span class='t' style='top:114.04px;font-size:7.1px;color:#303030;left:135.80px;transform:scaleX(0.921);transform-origin:right;-webkit-text-stroke:0.12px #303030;'>92511</span>
<span class='t' style='top:123.61px;font-size:7.1px;color:#303030;left:24.50px;transform:scaleX(0.897);transform-origin:right;-webkit-text-stroke:0.12px #303030;'>8</span>
<span class='t' style='top:123.61px;font-size:7.1px;color:#303030;left:40.35px;transform:scaleX(0.897);transform-origin:right;-webkit-text-stroke:0.12px #303030;'>75775</span>
<span class='t' style='top:123.61px;font-size:7.1px;color:#303030;left:71.99px;transform:scaleX(0.897);transform-origin:right;-webkit-text-stroke:0.12px #303030;'>57615</span>
<span class='t' style='top:123.61px;font-size:7.1px;color:#303030;left:103.63px;transform:scaleX(0.897);transform-origin:right;-webkit-text-stroke:0.12px #303030;'>53359</span>
<span class='t' style='top:123.61px;font-size:7.1px;color:#303030;left:135.27px;transform:scaleX(0.897);transform-origin:right;-webkit-text-stroke:0.12px #303030;'>39109</span>
<span class='t' style='top:133.18px;font-size:7.1px;color:#303030;left:24.50px;transform:scaleX(0.897);transform-origin:right;-webkit-text-stroke:0.12px #303030;'>9</span>
<span class='t' style='top:133.18px;font-size:7.1px;color:#303030;left:44.30px;transform:scaleX(0.897);transform-origin:right;-webkit-text-stroke:0.12px #303030;'>8431</span>
<span class='t' style='top:133.18px;font-size:7.1px;color:#303030;left:71.99px;transform:scaleX(0.897);transform-origin:right;-webkit-text-stroke:0.12px #303030;'>52185</span>
<span class='t' style='top:133.18px;font-size:7.1px;color:#303030;left:103.63px;transform:scaleX(0.897);transform-origin:right;-webkit-text-stroke:0.12px #303030;'>42013</span>
<span class='t' style='top:133.18px;font-size:7.1px;color:#303030;left:135.27px;transform:scaleX(0.897);transform-origin:right;-webkit-text-stroke:0.12px #303030;'>61732</span>
<span class='t' style='top:142.74px;font-size:7.1px;color:#303030;left:20.55px;transform:scaleX(0.897);transform-origin:right;-webkit-text-stroke:0.12px #303030;'>10</span>
<span class='t' style='top:142.74px;font-size:7.1px;color:#303030;left:40.35px;transform:scaleX(0.897);transform-origin:right;-webkit-text-stroke:0.12px #303030;'>66731</span>
<span class='t' style='top:142.74px;font-size:7.1px;color:#303030;left:71.99px;transform:scaleX(0.897);transform-origin:right;-webkit-text-stroke:0.12px #303030;'>73678</span>
<span class='t' style='top:142.74px;font-size:7.1px;color:#303030;left:107.58px;transform:scaleX(0.897);transform-origin:right;-webkit-text-stroke:0.12px #303030;'>3395</span>
<span class='t' style='top:142.74px;font-size:7.1px;color:#303030;left:135.27px;transform:scaleX(0.897);transform-origin:right;-webkit-text-stroke:0.12px #303030;'>42568</span>
<span class='t' style='top:152.31px;font-size:7.1px;color:#303030;left:21.08px;transform:scaleX(0.961);transform-origin:right;-webkit-text-stroke:0.12px #303030;'>11</span>
<span class='t' style='top:152.31px;font-size:7.1px;color:#303030;left:40.35px;transform:scaleX(0.897);transform-origin:right;-webkit-text-stroke:0.12px #303030;'>24238</span>
<span class='t' style='top:152.31px;font-size:7.1px;color:#303030;left:71.99px;transform:scaleX(0.897);transform-origin:right;-webkit-text-stroke:0.12px #303030;'>34733</span>
<span class='t' style='top:152.31px;font-size:7.1px;color:#303030;left:107.58px;transform:scaleX(0.897);transform-origin:right;-webkit-text-stroke:0.12px #303030;'>3102</span>
<span class='t' style='top:152.31px;font-size:7.1px;color:#303030;left:135.27px;transform:scaleX(0.897);transform-origin:right;-webkit-text-stroke:0.12px #303030;'>17691</span>
<span class='t' style='top:161.88px;font-size:7.1px;color:#303030;left:20.55px;transform:scaleX(0.897);transform-origin:right;-webkit-text-stroke:0.12px #303030;'>12</span>
<span class='t' style='top:161.88px;font-size:7.1px;color:#303030;left:40.35px;transform:scaleX(0.897);transform-origin:right;-webkit-text-stroke:0.12px #303030;'>76136</span>
<span class='t' style='top:161.88px;font-size:7.1px;color:#303030;left:71.99px;transform:scaleX(0.897);transform-origin:right;-webkit-text-stroke:0.12px #303030;'>34480</span>
<span class='t' style='top:161.88px;font-size:7.1px;color:#303030;left:103.63px;transform:scaleX(0.897);transform-origin:right;-webkit-text-stroke:0.12px #303030;'>10501</span>
<span class='t' style='top:161.88px;font-size:7.1px;color:#303030;left:135.27px;transform:scaleX(0.897);transform-origin:right;-webkit-text-stroke:0.12px #303030;'>21041</span>
<span class='t' style='top:171.44px;font-size:7.1px;color:#303030;left:20.55px;transform:scaleX(0.897);transform-origin:right;-webkit-text-stroke:0.12px #303030;'>13</span>
<span class='t' style='top:171.44px;font-size:7.1px;color:#303030;left:40.35px;transform:scaleX(0.897);transform-origin:right;-webkit-text-stroke:0.12px #303030;'>71986</span>
<span class='t' style='top:171.44px;font-size:7.1px;color:#303030;left:71.99px;transform:scaleX(0.897);transform-origin:right;-webkit-text-stroke:0.12px #303030;'>32774</span>
<span class='t' style='top:171.44px;font-size:7.1px;color:#303030;left:107.58px;transform:scaleX(0.897);transform-origin:right;-webkit-text-stroke:0.12px #303030;'>5899</span>
<span class='t' style='top:171.44px;font-size:7.1px;color:#303030;left:135.27px;transform:scaleX(0.897);transform-origin:right;-webkit-text-stroke:0.12px #303030;'>82920</span>
<span class='t' style='top:181.01px;font-size:7.1px;color:#303030;left:20.55px;transform:scaleX(0.897);transform-origin:right;-webkit-text-stroke:0.12px #303030;'>14</span>
<span class='t' style='top:181.01px;font-size:7.1px;color:#303030;left:44.30px;transform:scaleX(0.897);transform-origin:right;-webkit-text-stroke:0.12px #303030;'>6796</span>
<span class='t' style='top:181.01px;font-size:7.1px;color:#303030;left:71.99px;transform:scaleX(0.897);transform-origin:right;-webkit-text-stroke:0.12px #303030;'>25295</span>
<span class='t' style='top:181.01px;font-size:7.1px;color:#303030;left:103.63px;transform:scaleX(0.897);transform-origin:right;-webkit-text-stroke:0.12px #303030;'>70965</span>
<span class='t' style='top:181.01px;font-size:7.1px;color:#303030;left:135.27px;transform:scaleX(0.897);transform-origin:right;-webkit-text-stroke:0.12px #303030;'>81706</span>
<span class='t' style='top:190.58px;font-size:7.1px;color:#303030;left:20.55px;transform:scaleX(0.897);transform-origin:right;-webkit-text-stroke:0.12px #303030;'>15</span>
<span class='t' style='top:190.58px;font-size:7.1px;color:#303030;left:40.35px;transform:scaleX(0.897);transform-origin:right;-webkit-text-stroke:0.12px #303030;'>74934</span>
<span class='t' style='top:190.58px;font-size:7.1px;color:#303030;left:71.99px;transform:scaleX(0.897);transform-origin:right;-webkit-text-stroke:0.12px #303030;'>99601</span>
<span class='t' style='top:190.58px;font-size:7.1px;color:#303030;left:103.63px;transform:scaleX(0.897);transform-origin:right;-webkit-text-stroke:0.12px #303030;'>29514</span>
<span class='t' style='top:190.58px;font-size:7.1px;color:#303030;left:135.27px;transform:scaleX(0.897);transform-origin:right;-webkit-text-stroke:0.12px #303030;'>99675</span>
<span class='t' style='top:200.14px;font-size:7.1px;color:#303030;left:20.55px;transform:scaleX(0.897);transform-origin:right;-webkit-text-stroke:0.12px #303030;'>16</span>
<span class='t' style='top:200.14px;font-size:7.1px;color:#303030;left:40.35px;transform:scaleX(0.897);transform-origin:right;-webkit-text-stroke:0.12px #303030;'>67994</span>
<span class='t' style='top:200.14px;font-size:7.1px;color:#303030;left:71.99px;transform:scaleX(0.897);transform-origin:right;-webkit-text-stroke:0.12px #303030;'>64712</span>
<span class='t' style='top:200.14px;font-size:7.1px;color:#303030;left:103.63px;transform:scaleX(0.897);transform-origin:right;-webkit-text-stroke:0.12px #303030;'>15087</span>
<span class='t' style='top:200.14px;font-size:7.1px;color:#303030;left:135.27px;transform:scaleX(0.897);transform-origin:right;-webkit-text-stroke:0.12px #303030;'>23244</span>
<span class='t' style='top:209.71px;font-size:7.1px;color:#303030;left:20.55px;transform:scaleX(0.897);transform-origin:right;-webkit-text-stroke:0.12px #303030;'>17</span>
<span class='t' style='top:209.71px;font-size:7.1px;color:#303030;left:40.35px;transform:scaleX(0.897);transform-origin:right;-webkit-text-stroke:0.12px #303030;'>12031</span>
<span class='t' style='top:209.71px;font-size:7.1px;color:#303030;left:71.99px;transform:scaleX(0.897);transform-origin:right;-webkit-text-stroke:0.12px #303030;'>96813</span>
<span class='t' style='top:209.71px;font-size:7.1px;color:#303030;left:104.16px;transform:scaleX(0.921);transform-origin:right;-webkit-text-stroke:0.12px #303030;'>45113</span>
<span class='t' style='top:209.71px;font-size:7.1px;color:#303030;left:135.27px;transform:scaleX(0.897);transform-origin:right;-webkit-text-stroke:0.12px #303030;'>56004</span>
<span class='t' style='top:219.28px;font-size:7.1px;color:#303030;left:20.55px;transform:scaleX(0.897);transform-origin:right;-webkit-text-stroke:0.12px #303030;'>18</span>
<span class='t' style='top:219.28px;font-size:7.1px;color:#303030;left:40.35px;transform:scaleX(0.897);transform-origin:right;-webkit-text-stroke:0.12px #303030;'>25840</span>
<span class='t' style='top:219.28px;font-size:7.1px;color:#303030;left:71.99px;transform:scaleX(0.897);transform-origin:right;-webkit-text-stroke:0.12px #303030;'>99696</span>
<span class='t' style='top:219.28px;font-size:7.1px;color:#303030;left:103.63px;transform:scaleX(0.897);transform-origin:right;-webkit-text-stroke:0.12px #303030;'>87782</span>
<span class='t' style='top:219.28px;font-size:7.1px;color:#303030;left:135.27px;transform:scaleX(0.897);transform-origin:right;-webkit-text-stroke:0.12px #303030;'>58920</span>
<span class='t' style='top:228.85px;font-size:7.1px;color:#303030;left:20.55px;transform:scaleX(0.897);transform-origin:right;-webkit-text-stroke:0.12px #303030;'>19</span>
<span class='t' style='top:228.85px;font-size:7.1px;color:#303030;left:44.30px;transform:scaleX(0.897);transform-origin:right;-webkit-text-stroke:0.12px #303030;'>7229</span>
<span class='t' style='top:228.85px;font-size:7.1px;color:#303030;left:71.99px;transform:scaleX(0.897);transform-origin:right;-webkit-text-stroke:0.12px #303030;'>58483</span>
<span class='t' style='top:228.85px;font-size:7.1px;color:#303030;left:107.58px;transform:scaleX(0.897);transform-origin:right;-webkit-text-stroke:0.12px #303030;'>5899</span>
<span class='t' style='top:228.85px;font-size:7.1px;color:#303030;left:135.27px;transform:scaleX(0.897);transform-origin:right;-webkit-text-stroke:0.12px #303030;'>83888</span>
<span class='t' style='top:238.41px;font-size:7.1px;color:#303030;left:20.55px;transform:scaleX(0.897);transform-origin:right;-webkit-text-stroke:0.12px #303030;'>20</span>
<span class='t' style='top:238.41px;font-size:7.1px;color:#303030;left:40.35px;transform:scaleX(0.897);transform-origin:right;-webkit-text-stroke:0.12px #303030;'>38444</span>
<span class='t' style='top:238.41px;font-size:7.1px;color:#303030;left:71.99px;transform:scaleX(0.897);transform-origin:right;-webkit-text-stroke:0.12px #303030;'>93827</span>
<span class='t' style='top:238.41px;font-size:7.1px;color:#303030;left:103.63px;transform:scaleX(0.897);transform-origin:right;-webkit-text-stroke:0.12px #303030;'>95987</span>
<span class='t' style='top:238.41px;font-size:7.1px;color:#303030;left:135.27px;transform:scaleX(0.897);transform-origin:right;-webkit-text-stroke:0.12px #303030;'>53082</span>
<span class='t' style='top:247.98px;font-size:7.1px;color:#303030;left:20.55px;transform:scaleX(0.897);transform-origin:right;-webkit-text-stroke:0.12px #303030;'>21</span>
<span class='t' style='top:247.98px;font-size:7.1px;color:#303030;left:40.88px;transform:scaleX(0.921);transform-origin:right;-webkit-text-stroke:0.12px #303030;'>91911</span>
<span class='t' style='top:247.98px;font-size:7.1px;color:#303030;left:71.99px;transform:scaleX(0.897);transform-origin:right;-webkit-text-stroke:0.12px #303030;'>97285</span>
<span class='t' style='top:247.98px;font-size:7.1px;color:#303030;left:103.63px;transform:scaleX(0.897);transform-origin:right;-webkit-text-stroke:0.12px #303030;'>57082</span>
<span class='t' style='top:247.98px;font-size:7.1px;color:#303030;left:135.27px;transform:scaleX(0.897);transform-origin:right;-webkit-text-stroke:0.12px #303030;'>52746</span>
<span class='t' style='top:257.55px;font-size:7.1px;color:#303030;left:20.55px;transform:scaleX(0.897);transform-origin:right;-webkit-text-stroke:0.12px #303030;'>22</span>
<span class='t' style='top:257.55px;font-size:7.1px;color:#303030;left:40.35px;transform:scaleX(0.897);transform-origin:right;-webkit-text-stroke:0.12px #303030;'>74797</span>
<span class='t' style='top:257.55px;font-size:7.1px;color:#303030;left:71.99px;transform:scaleX(0.897);transform-origin:right;-webkit-text-stroke:0.12px #303030;'>72838</span>
<span class='t' style='top:257.55px;font-size:7.1px;color:#303030;left:103.63px;transform:scaleX(0.897);transform-origin:right;-webkit-text-stroke:0.12px #303030;'>76250</span>
<span class='t' style='top:257.55px;font-size:7.1px;color:#303030;left:135.27px;transform:scaleX(0.897);transform-origin:right;-webkit-text-stroke:0.12px #303030;'>89421</span>
<span class='t' style='top:267.11px;font-size:7.1px;color:#303030;left:20.55px;transform:scaleX(0.897);transform-origin:right;-webkit-text-stroke:0.12px #303030;'>23</span>
<span class='t' style='top:267.11px;font-size:7.1px;color:#303030;left:40.35px;transform:scaleX(0.897);transform-origin:right;-webkit-text-stroke:0.12px #303030;'>46806</span>
<span class='t' style='top:267.11px;font-size:7.1px;color:#303030;left:71.99px;transform:scaleX(0.897);transform-origin:right;-webkit-text-stroke:0.12px #303030;'>34056</span>
<span class='t' style='top:267.11px;font-size:7.1px;color:#303030;left:103.63px;transform:scaleX(0.897);transform-origin:right;-webkit-text-stroke:0.12px #303030;'>63830</span>
<span class='t' style='top:267.11px;font-size:7.1px;color:#303030;left:135.27px;transform:scaleX(0.897);transform-origin:right;-webkit-text-stroke:0.12px #303030;'>19751</span>
<span class='t' style='top:276.68px;font-size:7.1px;color:#303030;left:20.55px;transform:scaleX(0.897);transform-origin:right;-webkit-text-stroke:0.12px #303030;'>24</span>
<span class='t' style='top:276.68px;font-size:7.1px;color:#303030;left:40.35px;transform:scaleX(0.897);transform-origin:right;-webkit-text-stroke:0.12px #303030;'>12342</span>
<span class='t' style='top:276.68px;font-size:7.1px;color:#303030;left:71.99px;transform:scaleX(0.897);transform-origin:right;-webkit-text-stroke:0.12px #303030;'>88496</span>
<span class='t' style='top:276.68px;font-size:7.1px;color:#303030;left:103.63px;transform:scaleX(0.897);transform-origin:right;-webkit-text-stroke:0.12px #303030;'>69281</span>
<span class='t' style='top:276.68px;font-size:7.1px;color:#303030;left:135.27px;transform:scaleX(0.897);transform-origin:right;-webkit-text-stroke:0.12px #303030;'>43861</span>
<span class='t' style='top:286.25px;font-size:7.1px;color:#303030;left:20.55px;transform:scaleX(0.897);transform-origin:right;-webkit-text-stroke:0.12px #303030;'>25</span>
<span class='t' style='top:286.25px;font-size:7.1px;color:#303030;left:40.35px;transform:scaleX(0.897);transform-origin:right;-webkit-text-stroke:0.12px #303030;'>64917</span>
<span class='t' style='top:286.25px;font-size:7.1px;color:#303030;left:72.52px;transform:scaleX(0.921);transform-origin:right;-webkit-text-stroke:0.12px #303030;'>11753</span>
<span class='t' style='top:286.25px;font-size:7.1px;color:#303030;left:107.58px;transform:scaleX(0.897);transform-origin:right;-webkit-text-stroke:0.12px #303030;'>6670</span>
<span class='t' style='top:286.25px;font-size:7.1px;color:#303030;left:135.27px;transform:scaleX(0.897);transform-origin:right;-webkit-text-stroke:0.12px #303030;'>92836</span>
<span class='t' style='top:295.81px;font-size:7.1px;color:#303030;left:20.55px;transform:scaleX(0.897);transform-origin:right;-webkit-text-stroke:0.12px #303030;'>26</span>
<span class='t' style='top:295.81px;font-size:7.1px;color:#303030;left:40.35px;transform:scaleX(0.897);transform-origin:right;-webkit-text-stroke:0.12px #303030;'>57427</span>
<span class='t' style='top:295.81px;font-size:7.1px;color:#303030;left:71.99px;transform:scaleX(0.897);transform-origin:right;-webkit-text-stroke:0.12px #303030;'>69031</span>
<span class='t' style='top:295.81px;font-size:7.1px;color:#303030;left:103.63px;transform:scaleX(0.897);transform-origin:right;-webkit-text-stroke:0.12px #303030;'>37535</span>
<span class='t' style='top:295.81px;font-size:7.1px;color:#303030;left:139.22px;transform:scaleX(0.897);transform-origin:right;-webkit-text-stroke:0.12px #303030;'>5321</span>
<span class='t' style='top:305.38px;font-size:7.1px;color:#303030;left:20.55px;transform:scaleX(0.897);transform-origin:right;-webkit-text-stroke:0.12px #303030;'>27</span>
<span class='t' style='top:305.38px;font-size:7.1px;color:#303030;left:40.35px;transform:scaleX(0.897);transform-origin:right;-webkit-text-stroke:0.12px #303030;'>93933</span>
<span class='t' style='top:305.38px;font-size:7.1px;color:#303030;left:71.99px;transform:scaleX(0.897);transform-origin:right;-webkit-text-stroke:0.12px #303030;'>94391</span>
<span class='t' style='top:305.38px;font-size:7.1px;color:#303030;left:103.63px;transform:scaleX(0.897);transform-origin:right;-webkit-text-stroke:0.12px #303030;'>99366</span>
<span class='t' style='top:305.38px;font-size:7.1px;color:#303030;left:135.27px;transform:scaleX(0.897);transform-origin:right;-webkit-text-stroke:0.12px #303030;'>68703</span>
<span class='t' style='top:314.95px;font-size:7.1px;color:#303030;left:20.55px;transform:scaleX(0.897);transform-origin:right;-webkit-text-stroke:0.12px #303030;'>28</span>
<span class='t' style='top:314.95px;font-size:7.1px;color:#303030;left:40.35px;transform:scaleX(0.897);transform-origin:right;-webkit-text-stroke:0.12px #303030;'>10592</span>
<span class='t' style='top:314.95px;font-size:7.1px;color:#303030;left:72.52px;transform:scaleX(0.921);transform-origin:right;-webkit-text-stroke:0.12px #303030;'>61157</span>
<span class='t' style='top:314.95px;font-size:7.1px;color:#303030;left:103.63px;transform:scaleX(0.897);transform-origin:right;-webkit-text-stroke:0.12px #303030;'>19517</span>
<span class='t' style='top:314.95px;font-size:7.1px;color:#303030;left:135.27px;transform:scaleX(0.897);transform-origin:right;-webkit-text-stroke:0.12px #303030;'>31017</span>
<span class='t' style='top:324.52px;font-size:7.1px;color:#303030;left:20.55px;transform:scaleX(0.897);transform-origin:right;-webkit-text-stroke:0.12px #303030;'>29</span>
<span class='t' style='top:324.52px;font-size:7.1px;color:#303030;left:40.35px;transform:scaleX(0.897);transform-origin:right;-webkit-text-stroke:0.12px #303030;'>68546</span>
<span class='t' style='top:324.52px;font-size:7.1px;color:#303030;left:71.99px;transform:scaleX(0.897);transform-origin:right;-webkit-text-stroke:0.12px #303030;'>28766</span>
<span class='t' style='top:324.52px;font-size:7.1px;color:#303030;left:103.63px;transform:scaleX(0.897);transform-origin:right;-webkit-text-stroke:0.12px #303030;'>17278</span>
<span class='t' style='top:324.52px;font-size:7.1px;color:#303030;left:139.22px;transform:scaleX(0.897);transform-origin:right;-webkit-text-stroke:0.12px #303030;'>6667</span>
<span class='t' style='top:334.08px;font-size:7.1px;color:#303030;left:20.55px;transform:scaleX(0.897);transform-origin:right;-webkit-text-stroke:0.12px #303030;'>30</span>
<span class='t' style='top:334.08px;font-size:7.1px;color:#303030;left:40.35px;transform:scaleX(0.897);transform-origin:right;-webkit-text-stroke:0.12px #303030;'>68068</span>
<span class='t' style='top:334.08px;font-size:7.1px;color:#303030;left:71.99px;transform:scaleX(0.897);transform-origin:right;-webkit-text-stroke:0.12px #303030;'>34488</span>
<span class='t' style='top:334.08px;font-size:7.1px;color:#303030;left:103.63px;transform:scaleX(0.897);transform-origin:right;-webkit-text-stroke:0.12px #303030;'>38123</span>
<span class='t' style='top:334.08px;font-size:7.1px;color:#303030;left:135.27px;transform:scaleX(0.897);transform-origin:right;-webkit-text-stroke:0.12px #303030;'>25108</span>
<span class='t' style='top:343.65px;font-size:7.1px;color:#303030;left:20.55px;transform:scaleX(0.897);transform-origin:right;-webkit-text-stroke:0.12px #303030;'>31</span>
<span class='t' style='top:343.65px;font-size:7.1px;color:#303030;left:40.35px;transform:scaleX(0.897);transform-origin:right;-webkit-text-stroke:0.12px #303030;'>47938</span>
<span class='t' style='top:343.65px;font-size:7.1px;color:#303030;left:71.99px;transform:scaleX(0.897);transform-origin:right;-webkit-text-stroke:0.12px #303030;'>42340</span>
<span class='t' style='top:343.65px;font-size:7.1px;color:#303030;left:103.63px;transform:scaleX(0.897);transform-origin:right;-webkit-text-stroke:0.12px #303030;'>35357</span>
<span class='t' style='top:343.65px;font-size:7.1px;color:#303030;left:135.27px;transform:scaleX(0.897);transform-origin:right;-webkit-text-stroke:0.12px #303030;'>65654</span>
<span class='t' style='top:353.22px;font-size:7.1px;color:#303030;left:20.55px;transform:scaleX(0.897);transform-origin:right;-webkit-text-stroke:0.12px #303030;'>32</span>
<span class='t' style='top:353.22px;font-size:7.1px;color:#303030;left:40.35px;transform:scaleX(0.897);transform-origin:right;-webkit-text-stroke:0.12px #303030;'>87355</span>
<span class='t' style='top:353.22px;font-size:7.1px;color:#303030;left:71.99px;transform:scaleX(0.897);transform-origin:right;-webkit-text-stroke:0.12px #303030;'>66766</span>
<span class='t' style='top:353.22px;font-size:7.1px;color:#303030;left:103.63px;transform:scaleX(0.897);transform-origin:right;-webkit-text-stroke:0.12px #303030;'>75903</span>
<span class='t' style='top:353.22px;font-size:7.1px;color:#303030;left:135.27px;transform:scaleX(0.897);transform-origin:right;-webkit-text-stroke:0.12px #303030;'>37767</span>
<span class='t' style='top:362.78px;font-size:7.1px;color:#303030;left:20.55px;transform:scaleX(0.897);transform-origin:right;-webkit-text-stroke:0.12px #303030;'>33</span>
<span class='t' style='top:362.78px;font-size:7.1px;color:#303030;left:40.35px;transform:scaleX(0.897);transform-origin:right;-webkit-text-stroke:0.12px #303030;'>33498</span>
<span class='t' style='top:362.78px;font-size:7.1px;color:#303030;left:71.99px;transform:scaleX(0.897);transform-origin:right;-webkit-text-stroke:0.12px #303030;'>63267</span>
<span class='t' style='top:362.78px;font-size:7.1px;color:#303030;left:103.63px;transform:scaleX(0.897);transform-origin:right;-webkit-text-stroke:0.12px #303030;'>61352</span>
<span class='t' style='top:362.78px;font-size:7.1px;color:#303030;left:135.27px;transform:scaleX(0.897);transform-origin:right;-webkit-text-stroke:0.12px #303030;'>15619</span>
<span class='t' style='top:372.35px;font-size:7.1px;color:#303030;left:20.55px;transform:scaleX(0.897);transform-origin:right;-webkit-text-stroke:0.12px #303030;'>34</span>
<span class='t' style='top:372.35px;font-size:7.1px;color:#303030;left:40.35px;transform:scaleX(0.897);transform-origin:right;-webkit-text-stroke:0.12px #303030;'>62379</span>
<span class='t' style='top:372.35px;font-size:7.1px;color:#303030;left:71.99px;transform:scaleX(0.897);transform-origin:right;-webkit-text-stroke:0.12px #303030;'>13861</span>
<span class='t' style='top:372.35px;font-size:7.1px;color:#303030;left:103.63px;transform:scaleX(0.897);transform-origin:right;-webkit-text-stroke:0.12px #303030;'>37624</span>
<span class='t' style='top:372.35px;font-size:7.1px;color:#303030;left:135.27px;transform:scaleX(0.897);transform-origin:right;-webkit-text-stroke:0.12px #303030;'>45094</span>
<span class='t' style='top:381.92px;font-size:7.1px;color:#303030;left:20.55px;transform:scaleX(0.897);transform-origin:right;-webkit-text-stroke:0.12px #303030;'>35</span>
<span class='t' style='top:381.92px;font-size:7.1px;color:#303030;left:40.35px;transform:scaleX(0.897);transform-origin:right;-webkit-text-stroke:0.12px #303030;'>72257</span>
<span class='t' style='top:381.92px;font-size:7.1px;color:#303030;left:71.99px;transform:scaleX(0.897);transform-origin:right;-webkit-text-stroke:0.12px #303030;'>27291</span>
<span class='t' style='top:381.92px;font-size:7.1px;color:#303030;left:103.63px;transform:scaleX(0.897);transform-origin:right;-webkit-text-stroke:0.12px #303030;'>36801</span>
<span class='t' style='top:381.92px;font-size:7.1px;color:#303030;left:135.27px;transform:scaleX(0.897);transform-origin:right;-webkit-text-stroke:0.12px #303030;'>33315</span>
<span class='t' style='top:391.48px;font-size:7.1px;color:#303030;left:20.55px;transform:scaleX(0.897);transform-origin:right;-webkit-text-stroke:0.12px #303030;'>36</span>
<span class='t' style='top:391.48px;font-size:7.1px;color:#303030;left:40.35px;transform:scaleX(0.897);transform-origin:right;-webkit-text-stroke:0.12px #303030;'>52654</span>
<span class='t' style='top:391.48px;font-size:7.1px;color:#303030;left:71.99px;transform:scaleX(0.897);transform-origin:right;-webkit-text-stroke:0.12px #303030;'>56150</span>
<span class='t' style='top:391.48px;font-size:7.1px;color:#303030;left:103.63px;transform:scaleX(0.897);transform-origin:right;-webkit-text-stroke:0.12px #303030;'>14228</span>
<span class='t' style='top:391.48px;font-size:7.1px;color:#303030;left:135.27px;transform:scaleX(0.897);transform-origin:right;-webkit-text-stroke:0.12px #303030;'>67027</span>
<span class='t' style='top:401.05px;font-size:7.1px;color:#303030;left:20.55px;transform:scaleX(0.897);transform-origin:right;-webkit-text-stroke:0.12px #303030;'>37</span>
<span class='t' style='top:401.05px;font-size:7.1px;color:#303030;left:40.35px;transform:scaleX(0.897);transform-origin:right;-webkit-text-stroke:0.12px #303030;'>78842</span>
<span class='t' style='top:401.05px;font-size:7.1px;color:#303030;left:71.99px;transform:scaleX(0.897);transform-origin:right;-webkit-text-stroke:0.12px #303030;'>80162</span>
<span class='t' style='top:401.05px;font-size:7.1px;color:#303030;left:103.63px;transform:scaleX(0.897);transform-origin:right;-webkit-text-stroke:0.12px #303030;'>64835</span>
<span class='t' style='top:401.05px;font-size:7.1px;color:#303030;left:135.27px;transform:scaleX(0.897);transform-origin:right;-webkit-text-stroke:0.12px #303030;'>98604</span>
<span class='t' style='top:410.62px;font-size:7.1px;color:#303030;left:20.55px;transform:scaleX(0.897);transform-origin:right;-webkit-text-stroke:0.12px #303030;'>38</span>
<span class='t' style='top:410.62px;font-size:7.1px;color:#303030;left:48.25px;transform:scaleX(0.897);transform-origin:right;-webkit-text-stroke:0.12px #303030;'>570</span>
<span class='t' style='top:410.62px;font-size:7.1px;color:#303030;left:71.99px;transform:scaleX(0.897);transform-origin:right;-webkit-text-stroke:0.12px #303030;'>80636</span>
<span class='t' style='top:410.62px;font-size:7.1px;color:#303030;left:103.63px;transform:scaleX(0.897);transform-origin:right;-webkit-text-stroke:0.12px #303030;'>67448</span>
<span class='t' style='top:410.62px;font-size:7.1px;color:#303030;left:135.27px;transform:scaleX(0.897);transform-origin:right;-webkit-text-stroke:0.12px #303030;'>88947</span>
<span class='t' style='top:420.19px;font-size:7.1px;color:#303030;left:20.55px;transform:scaleX(0.897);transform-origin:right;-webkit-text-stroke:0.12px #303030;'>39</span>
<span class='t' style='top:420.19px;font-size:7.1px;color:#303030;left:40.35px;transform:scaleX(0.897);transform-origin:right;-webkit-text-stroke:0.12px #303030;'>77192</span>
<span class='t' style='top:420.19px;font-size:7.1px;color:#303030;left:71.99px;transform:scaleX(0.897);transform-origin:right;-webkit-text-stroke:0.12px #303030;'>15637</span>
<span class='t' style='top:420.19px;font-size:7.1px;color:#303030;left:103.63px;transform:scaleX(0.897);transform-origin:right;-webkit-text-stroke:0.12px #303030;'>39080</span>
<span class='t' style='top:420.19px;font-size:7.1px;color:#303030;left:135.27px;transform:scaleX(0.897);transform-origin:right;-webkit-text-stroke:0.12px #303030;'>24612</span>
<span class='t' style='top:429.75px;font-size:7.1px;color:#303030;left:20.55px;transform:scaleX(0.897);transform-origin:right;-webkit-text-stroke:0.12px #303030;'>40</span>
<span class='t' style='top:429.75px;font-size:7.1px;color:#303030;left:40.35px;transform:scaleX(0.897);transform-origin:right;-webkit-text-stroke:0.12px #303030;'>52094</span>
<span class='t' style='top:429.75px;font-size:7.1px;color:#303030;left:71.99px;transform:scaleX(0.897);transform-origin:right;-webkit-text-stroke:0.12px #303030;'>31748</span>
<span class='t' style='top:429.75px;font-size:7.1px;color:#303030;left:103.63px;transform:scaleX(0.897);transform-origin:right;-webkit-text-stroke:0.12px #303030;'>59794</span>
<span class='t' style='top:429.75px;font-size:7.1px;color:#303030;left:135.27px;transform:scaleX(0.897);transform-origin:right;-webkit-text-stroke:0.12px #303030;'>87646</span>
<span class='t' style='top:439.32px;font-size:7.1px;color:#303030;left:20.55px;transform:scaleX(0.897);transform-origin:right;-webkit-text-stroke:0.12px #303030;'>41</span>
<span class='t' style='top:439.32px;font-size:7.1px;color:#303030;left:40.35px;transform:scaleX(0.897);transform-origin:right;-webkit-text-stroke:0.12px #303030;'>98680</span>
<span class='t' style='top:439.32px;font-size:7.1px;color:#303030;left:71.99px;transform:scaleX(0.897);transform-origin:right;-webkit-text-stroke:0.12px #303030;'>72979</span>
<span class='t' style='top:439.32px;font-size:7.1px;color:#303030;left:103.63px;transform:scaleX(0.897);transform-origin:right;-webkit-text-stroke:0.12px #303030;'>34906</span>
<span class='t' style='top:439.32px;font-size:7.1px;color:#303030;left:135.27px;transform:scaleX(0.897);transform-origin:right;-webkit-text-stroke:0.12px #303030;'>20622</span>
<span class='t' style='top:448.89px;font-size:7.1px;color:#303030;left:20.55px;transform:scaleX(0.897);transform-origin:right;-webkit-text-stroke:0.12px #303030;'>42</span>
<span class='t' style='top:448.89px;font-size:7.1px;color:#303030;left:40.35px;transform:scaleX(0.897);transform-origin:right;-webkit-text-stroke:0.12px #303030;'>29337</span>
<span class='t' style='top:448.89px;font-size:7.1px;color:#303030;left:71.99px;transform:scaleX(0.897);transform-origin:right;-webkit-text-stroke:0.12px #303030;'>20472</span>
<span class='t' style='top:448.89px;font-size:7.1px;color:#303030;left:103.63px;transform:scaleX(0.897);transform-origin:right;-webkit-text-stroke:0.12px #303030;'>78486</span>
<span class='t' style='top:448.89px;font-size:7.1px;color:#303030;left:135.27px;transform:scaleX(0.897);transform-origin:right;-webkit-text-stroke:0.12px #303030;'>46989</span>
<span class='t' style='top:458.45px;font-size:7.1px;color:#303030;left:20.55px;transform:scaleX(0.897);transform-origin:right;-webkit-text-stroke:0.12px #303030;'>43</span>
<span class='t' style='top:458.45px;font-size:7.1px;color:#303030;left:40.35px;transform:scaleX(0.897);transform-origin:right;-webkit-text-stroke:0.12px #303030;'>79324</span>
<span class='t' style='top:458.45px;font-size:7.1px;color:#303030;left:71.99px;transform:scaleX(0.897);transform-origin:right;-webkit-text-stroke:0.12px #303030;'>86354</span>
<span class='t' style='top:458.45px;font-size:7.1px;color:#303030;left:103.63px;transform:scaleX(0.897);transform-origin:right;-webkit-text-stroke:0.12px #303030;'>93275</span>
<span class='t' style='top:458.45px;font-size:7.1px;color:#303030;left:135.27px;transform:scaleX(0.897);transform-origin:right;-webkit-text-stroke:0.12px #303030;'>54918</span>
<span class='t' style='top:468.02px;font-size:7.1px;color:#303030;left:20.55px;transform:scaleX(0.897);transform-origin:right;-webkit-text-stroke:0.12px #303030;'>44</span>
<span class='t' style='top:468.02px;font-size:7.1px;color:#303030;left:40.35px;transform:scaleX(0.897);transform-origin:right;-webkit-text-stroke:0.12px #303030;'>57938</span>
<span class='t' style='top:468.02px;font-size:7.1px;color:#303030;left:71.99px;transform:scaleX(0.897);transform-origin:right;-webkit-text-stroke:0.12px #303030;'>85396</span>
<span class='t' style='top:468.02px;font-size:7.1px;color:#303030;left:103.63px;transform:scaleX(0.897);transform-origin:right;-webkit-text-stroke:0.12px #303030;'>85423</span>
<span class='t' style='top:468.02px;font-size:7.1px;color:#303030;left:135.27px;transform:scaleX(0.897);transform-origin:right;-webkit-text-stroke:0.12px #303030;'>56300</span>
<span class='t' style='top:477.59px;font-size:7.1px;color:#303030;left:20.55px;transform:scaleX(0.897);transform-origin:right;-webkit-text-stroke:0.12px #303030;'>45</span>
<span class='t' style='top:477.59px;font-size:7.1px;color:#303030;left:48.25px;transform:scaleX(0.897);transform-origin:right;-webkit-text-stroke:0.12px #303030;'>580</span>
<span class='t' style='top:477.59px;font-size:7.1px;color:#303030;left:71.99px;transform:scaleX(0.897);transform-origin:right;-webkit-text-stroke:0.12px #303030;'>53098</span>
<span class='t' style='top:477.59px;font-size:7.1px;color:#303030;left:103.63px;transform:scaleX(0.897);transform-origin:right;-webkit-text-stroke:0.12px #303030;'>99426</span>
<span class='t' style='top:477.59px;font-size:7.1px;color:#303030;left:135.80px;transform:scaleX(0.921);transform-origin:right;-webkit-text-stroke:0.12px #303030;'>91159</span>
<span class='t' style='top:487.15px;font-size:7.1px;color:#303030;left:20.55px;transform:scaleX(0.897);transform-origin:right;-webkit-text-stroke:0.12px #303030;'>46</span>
<span class='t' style='top:487.15px;font-size:7.1px;color:#303030;left:40.35px;transform:scaleX(0.897);transform-origin:right;-webkit-text-stroke:0.12px #303030;'>15073</span>
<span class='t' style='top:487.15px;font-size:7.1px;color:#303030;left:71.99px;transform:scaleX(0.897);transform-origin:right;-webkit-text-stroke:0.12px #303030;'>79154</span>
<span class='t' style='top:487.15px;font-size:7.1px;color:#303030;left:103.63px;transform:scaleX(0.897);transform-origin:right;-webkit-text-stroke:0.12px #303030;'>64457</span>
<span class='t' style='top:487.15px;font-size:7.1px;color:#303030;left:135.27px;transform:scaleX(0.897);transform-origin:right;-webkit-text-stroke:0.12px #303030;'>14399</span>
<span class='t' style='top:496.72px;font-size:7.1px;color:#303030;left:20.55px;transform:scaleX(0.897);transform-origin:right;-webkit-text-stroke:0.12px #303030;'>47</span>
<span class='t' style='top:496.72px;font-size:7.1px;color:#303030;left:40.35px;transform:scaleX(0.897);transform-origin:right;-webkit-text-stroke:0.12px #303030;'>20712</span>
<span class='t' style='top:496.72px;font-size:7.1px;color:#303030;left:71.99px;transform:scaleX(0.897);transform-origin:right;-webkit-text-stroke:0.12px #303030;'>81895</span>
<span class='t' style='top:496.72px;font-size:7.1px;color:#303030;left:103.63px;transform:scaleX(0.897);transform-origin:right;-webkit-text-stroke:0.12px #303030;'>31477</span>
<span class='t' style='top:496.72px;font-size:7.1px;color:#303030;left:135.27px;transform:scaleX(0.897);transform-origin:right;-webkit-text-stroke:0.12px #303030;'>35885</span>
<span class='t' style='top:506.29px;font-size:7.1px;color:#303030;left:20.55px;transform:scaleX(0.897);transform-origin:right;-webkit-text-stroke:0.12px #303030;'>48</span>
<span class='t' style='top:506.29px;font-size:7.1px;color:#303030;left:40.35px;transform:scaleX(0.897);transform-origin:right;-webkit-text-stroke:0.12px #303030;'>96064</span>
<span class='t' style='top:506.29px;font-size:7.1px;color:#303030;left:71.99px;transform:scaleX(0.897);transform-origin:right;-webkit-text-stroke:0.12px #303030;'>70516</span>
<span class='t' style='top:506.29px;font-size:7.1px;color:#303030;left:107.58px;transform:scaleX(0.897);transform-origin:right;-webkit-text-stroke:0.12px #303030;'>1842</span>
<span class='t' style='top:506.29px;font-size:7.1px;color:#303030;left:135.27px;transform:scaleX(0.897);transform-origin:right;-webkit-text-stroke:0.12px #303030;'>72995</span>
<span class='t' style='top:515.86px;font-size:7.1px;color:#303030;left:20.55px;transform:scaleX(0.897);transform-origin:right;-webkit-text-stroke:0.12px #303030;'>49</span>
<span class='t' style='top:515.86px;font-size:7.1px;color:#303030;left:40.35px;transform:scaleX(0.897);transform-origin:right;-webkit-text-stroke:0.12px #303030;'>37122</span>
<span class='t' style='top:515.86px;font-size:7.1px;color:#303030;left:71.99px;transform:scaleX(0.897);transform-origin:right;-webkit-text-stroke:0.12px #303030;'>70345</span>
<span class='t' style='top:515.86px;font-size:7.1px;color:#303030;left:103.63px;transform:scaleX(0.897);transform-origin:right;-webkit-text-stroke:0.12px #303030;'>63933</span>
<span class='t' style='top:515.86px;font-size:7.1px;color:#303030;left:135.27px;transform:scaleX(0.897);transform-origin:right;-webkit-text-stroke:0.12px #303030;'>65838</span>
<div style='left:29.3px;top:41.6px;width:30.9px;height:7.8px;border:1.4px solid #2f7d3e'></div>
<div style='left:59.60px;top:49.20px;width:3.80px;height:3.80px;background:#2f7d3e;'></div>
<div style='left:60.60px;top:50.20px;width:1.80px;height:1.80px;background:#ffffff;opacity:0.35'></div>
<div style='left:973.00px;top:0.00px;width:51.00px;height:92.80px;background:#48754c;'></div>
<div style='left:0.00px;top:514.70px;width:155.00px;height:18.30px;background:#48754c;'></div>
<div style='left:604.7px;top:92.9px;width:18.3px;height:2.2px;background:repeating-linear-gradient(90deg,rgba(220,50,50,0.6) 0 1.4px,rgba(220,50,50,0.12) 1.4px 3.2px)'></div>
<div style='left:636px;top:92.9px;width:3.0px;height:2.2px;background:repeating-linear-gradient(90deg,rgba(220,50,50,0.6) 0 1.4px,rgba(220,50,50,0.12) 1.4px 3.2px)'></div>
<div style='left:644.5px;top:92.9px;width:7.5px;height:2.2px;background:repeating-linear-gradient(90deg,rgba(220,50,50,0.6) 0 1.4px,rgba(220,50,50,0.12) 1.4px 3.2px)'></div>
<div style='left:668px;top:92.9px;width:13.0px;height:2.2px;background:repeating-linear-gradient(90deg,rgba(220,50,50,0.6) 0 1.4px,rgba(220,50,50,0.12) 1.4px 3.2px)'></div>
<div style='left:707px;top:92.9px;width:19.0px;height:2.2px;background:repeating-linear-gradient(90deg,rgba(220,50,50,0.6) 0 1.4px,rgba(220,50,50,0.12) 1.4px 3.2px)'></div>
<div style='left:737px;top:92.9px;width:23.6px;height:2.2px;background:repeating-linear-gradient(90deg,rgba(220,50,50,0.6) 0 1.4px,rgba(220,50,50,0.12) 1.4px 3.2px)'></div>
<div style='left:773.5px;top:92.9px;width:17.2px;height:2.2px;background:repeating-linear-gradient(90deg,rgba(220,50,50,0.6) 0 1.4px,rgba(220,50,50,0.12) 1.4px 3.2px)'></div>
<div style='left:817.5px;top:92.9px;width:4.5px;height:2.2px;background:repeating-linear-gradient(90deg,rgba(220,50,50,0.6) 0 1.4px,rgba(220,50,50,0.12) 1.4px 3.2px)'></div>
<div style='left:841.6px;top:92.9px;width:13.1px;height:2.2px;background:repeating-linear-gradient(90deg,rgba(220,50,50,0.6) 0 1.4px,rgba(220,50,50,0.12) 1.4px 3.2px)'></div>
<div style='left:874.4px;top:92.9px;width:17.6px;height:2.2px;background:repeating-linear-gradient(90deg,rgba(220,50,50,0.6) 0 1.4px,rgba(220,50,50,0.12) 1.4px 3.2px)'></div>
<div style='left:909.4px;top:92.9px;width:17.6px;height:2.2px;background:repeating-linear-gradient(90deg,rgba(220,50,50,0.6) 0 1.4px,rgba(220,50,50,0.12) 1.4px 3.2px)'></div>
<div style='left:942px;top:92.9px;width:13.0px;height:2.2px;background:repeating-linear-gradient(90deg,rgba(220,50,50,0.6) 0 1.4px,rgba(220,50,50,0.12) 1.4px 3.2px)'></div>
<div style='left:975px;top:92.9px;width:19.7px;height:2.2px;background:repeating-linear-gradient(90deg,rgba(220,50,50,0.6) 0 1.4px,rgba(220,50,50,0.12) 1.4px 3.2px)'></div>
<div style='left:1003.5px;top:92.9px;width:17.5px;height:2.2px;background:repeating-linear-gradient(90deg,rgba(220,50,50,0.6) 0 1.4px,rgba(220,50,50,0.12) 1.4px 3.2px)'></div>
<div style='left:973.00px;top:92.80px;width:51.00px;height:2.20px;background:#ffffff;'></div>
<div style='left:975px;top:92.9px;width:19.7px;height:2.2px;background:repeating-linear-gradient(90deg,rgba(220,50,50,0.6) 0 1.4px,rgba(220,50,50,0.12) 1.4px 3.2px)'></div>
<div style='left:1003.5px;top:92.9px;width:17.5px;height:2.2px;background:repeating-linear-gradient(90deg,rgba(220,50,50,0.6) 0 1.4px,rgba(220,50,50,0.12) 1.4px 3.2px)'></div>
<div style='left:155.00px;top:95.00px;width:869.00px;height:438.00px;background:#f0f0f0;'></div>
<div style='left:155.00px;top:95.00px;width:869.00px;height:24.00px;background:#ffffff;'></div>
<div style='left:155.00px;top:95.00px;width:1.60px;height:438.00px;background:#b8b8b8;'></div>
<div style='left:155.00px;top:95.00px;width:869.00px;height:1.00px;background:#b8b8b8;'></div>
<svg style='left:158px;top:96px' width='20' height='22' viewBox='0 0 20 22'>
<rect x='3.7' y='11.2' width='13' height='5.4' rx='2.6' fill='#5e5e5e'/>
<ellipse cx='10.2' cy='12.4' rx='6.3' ry='1.5' fill='#8c8c8c'/>
<rect x='5' y='13.6' width='10.4' height='2.2' rx='1' fill='#777'/>
<circle cx='5.6' cy='14.3' r='0.9' fill='#e8e8e8'/>
<path d='M7 9.4 H13.6 L10.3 12.2 Z' fill='#5a5a5a' opacity='0.75'/>
<rect x='8.9' y='4' width='3.1' height='6.6' rx='1' fill='#6ea6dc'/>
<rect x='9.8' y='4.4' width='1.2' height='6' fill='#a8cdef'/>
</svg>
<span class='t' style='top:107.60px;font-size:9.8px;color:#2a2a2a;left:177.20px;transform:scaleX(0.943);transform-origin:left;'>Data Import - [C:/AMETest/datatest.xlsx]</span>
<div style='left:930.80px;top:106.80px;width:8.00px;height:1.00px;background:#555;'></div>
<div style='left:966.9px;top:103.3px;width:6.6px;height:6.6px;border:1.1px solid #555'></div>
<svg style='left:1003px;top:102px' width='11' height='11'><path d='M1 1 L9.5 9.5 M9.5 1 L1 9.5' stroke='#555' stroke-width='1.05' fill='none'/></svg>
<div style='left:165.20px;top:128.00px;width:87.80px;height:70.50px;background:#ffffff;box-shadow:0 0 0 0.6px #e2e2e2'></div>
<div style='left:259.00px;top:128.00px;width:162.00px;height:70.50px;background:#ffffff;box-shadow:0 0 0 0.6px #e2e2e2'></div>
<div style='left:426.80px;top:128.00px;width:111.40px;height:70.50px;background:#ffffff;box-shadow:0 0 0 0.6px #e2e2e2'></div>
<div style='left:544.00px;top:128.00px;width:236.20px;height:70.50px;background:#ffffff;box-shadow:0 0 0 0.6px #e2e2e2'></div>
<span class='t' style='top:135.78px;font-size:9px;color:#2f6aa0;font-weight:bold;left:168.80px;transform:scaleX(0.978);transform-origin:left;'>Source file</span>
<span class='t' style='top:135.78px;font-size:9px;color:#2f6aa0;font-weight:bold;left:263.00px;'>Table operations</span>
<span class='t' style='top:135.78px;font-size:9px;color:#2f6aa0;font-weight:bold;left:431.00px;transform:scaleX(1.026);transform-origin:left;'>Table type</span>
<span class='t' style='top:135.78px;font-size:9px;color:#2f6aa0;font-weight:bold;left:547.70px;transform:scaleX(0.967);transform-origin:left;'>Selection</span>
<span class='t' style='top:172.02px;font-size:8.6px;color:#3a3a3a;left:180.50px;transform:scaleX(0.884);transform-origin:left;'>Open</span>
<span class='t' style='top:172.02px;font-size:8.6px;color:#3a3a3a;left:215.00px;transform:scaleX(0.917);transform-origin:left;'>Reload</span>
<span class='t' style='top:171.92px;font-size:8.6px;color:#3a3a3a;left:273.60px;transform:scaleX(0.943);transform-origin:left;'>Transpose</span>
<span class='t' style='top:171.92px;font-size:8.6px;color:#3a3a3a;left:334.00px;transform:scaleX(0.931);transform-origin:left;'>Remove</span>
<span class='t' style='top:181.62px;font-size:8.6px;color:#3a3a3a;left:327.80px;transform:scaleX(0.978);transform-origin:left;'>empty rows</span>
<span class='t' style='top:171.92px;font-size:8.6px;color:#3a3a3a;left:386.00px;transform:scaleX(0.983);transform-origin:left;'>Sort</span>
<svg style='left:408px;top:166px' width='5' height='4'><path d='M0.5 0.5 L2.5 2.6 L4.5 0.5' stroke='#555' stroke-width='0.9' fill='none'/></svg>
<svg style='left:176px;top:145px' width='24' height='24' viewBox='0 0 24 24'>
<path d='M5.4 19.6 V7.6 Q5.4 6.8 6.2 6.8 H9.6 L10.8 8.2 H10.8 V19.6 Z' fill='#efe3cc' stroke='#a88a66' stroke-width='0.8'/>
<path d='M8.6 19.4 V9.6 H19.2 V19.4 Z' fill='#f6d77e' stroke='#b08a5a' stroke-width='0.8'/>
<path d='M6 19.6 L8.2 12.4 H21.2 L19 19.6 Z' fill='#f8d98a' stroke='#a8845a' stroke-width='0.8' stroke-linejoin='round'/>
</svg>
<svg style='left:217px;top:144px' width='24' height='24' viewBox='0 0 24 24'>
<path d='M14.4 5.2 A8 8 0 0 1 13.6 20.4' stroke='#8cbde6' stroke-width='0.9' fill='none'/>
<path d='M4.6 17.6 A8 8 0 0 1 12.6 4.5' stroke='#8cbde6' stroke-width='0.9' fill='none'/>
<path d='M4.6 17.6 A8 8 0 0 0 12 20.5' stroke='#b8d8f0' stroke-width='0.9' fill='none'/>
<path d='M15.2 8.9 V5.6 H18.7' stroke='#3f7dbe' stroke-width='0.9' fill='none'/>
<path d='M15.3 5.7 L18 8.4' stroke='#3f7dbe' stroke-width='0.8'/>
<path d='M4.8 16.1 V19.6 H8.4' stroke='#3f7dbe' stroke-width='0.9' fill='none'/>
</svg>
<svg style='left:284px;top:148px' width='20' height='18' viewBox='0 0 20 18'>
<g fill='#fff' stroke='#8a8a8a' stroke-width='0.8'>
<rect x='5' y='0.5' width='4.4' height='4'/><rect x='9.4' y='0.5' width='4.4' height='4'/><rect x='13.8' y='0.5' width='4.4' height='4'/>
<rect x='0.6' y='8.5' width='4.4' height='4'/><rect x='0.6' y='12.5' width='4.4' height='4'/>
</g>
<rect x='0.6' y='4.5' width='4.4' height='4' fill='#8ab8e0' stroke='#6a8aa8' stroke-width='0.8'/>
<path d='M8 14.5 Q14.5 14.5 15.5 7.5' stroke='#6a9ac8' stroke-width='0.8' fill='none'/>
<path d='M14 8.5 L15.6 6 L17 8.6' stroke='#6a9ac8' stroke-width='0.8' fill='none'/>
<path d='M9 13 L7.6 14.5 L9.2 16' stroke='#6a9ac8' stroke-width='0.8' fill='none'/>
</svg>
<svg style='left:336px;top:144px' width='26' height='24' viewBox='0 0 26 24'>
<g fill='#f2f2f2' stroke='#9a9a9a' stroke-width='0.8'>
<rect x='5.9' y='6.2' width='5.2' height='4.6'/><rect x='11.1' y='6.2' width='5.2' height='4.6'/><rect x='16.3' y='6.2' width='4.9' height='4.6'/>
<rect x='5.9' y='10.8' width='5.2' height='4.6'/><rect x='11.1' y='10.8' width='5.2' height='4.6'/><rect x='16.3' y='10.8' width='4.9' height='4.6'/>
</g>
<circle cx='17.6' cy='16.6' r='4.1' fill='#c8302c' stroke='#8a3a30' stroke-width='0.6'/>
<path d='M16 15 L19.2 18.2 M19.2 15 L16 18.2' stroke='#f4d0d0' stroke-width='0.8'/>
</svg>
<span class='t' style='top:153.41px;font-size:7.2px;color:#333;font-weight:bold;left:388.30px;'>A</span>
<div style='left:388.60px;top:156.30px;width:4.80px;height:0.60px;background:#555;'></div>
<span class='t' style='top:160.64px;font-size:7.4px;color:#333;font-weight:bold;left:388.64px;'>Z</span>
<svg style='left:395px;top:150px' width='8' height='14'><path d='M1.2 5.8 L3.6 1.8 L6 5.8Z' fill='#3a3a3a'/><path d='M1.2 7.8 L3.6 11.6 L6 7.8Z' fill='#3d9a50'/></svg>
<span class='t' style='top:154.02px;font-size:8.6px;color:#3a3a3a;left:436.70px;transform:scaleX(0.939);transform-origin:left;'>Type</span>
<div style='left:459.2px;top:145px;width:49.8px;height:14.4px;border:0.9px solid #cdcdcd;background:#fff'></div>
<svg style='left:461px;top:146px' width='14' height='13' viewBox='0 0 14 13'>
<rect x='0.6' y='10.2' width='11.6' height='2.2' fill='#e6eaee'/>
<path d='M1.6 10.4 Q4.6 10.2 5.8 6.6 Q7 2.6 11 1.2' stroke='#e6b040' stroke-width='0.9' fill='none' stroke-dasharray='1.6 0.6'/>
<path d='M0.8 7 L10.6 7' stroke='#3a6ab0' stroke-width='0.9'/><path d='M9.2 5.4 L11.2 7 L9.2 8.6 Z' fill='#3a6ab0'/>
<rect x='0.4' y='0.8' width='0.8' height='11.2' fill='#8aa4c8'/>
<rect x='10.6' y='10.6' width='1.6' height='1.6' fill='#333'/>
</svg>
<span class='t' style='top:153.51px;font-size:9.2px;color:#333;left:477.60px;transform:scaleX(0.850);transform-origin:left;'>1D/XY</span>
<svg style='left:503.8px;top:151.4px' width='5' height='4'><path d='M0.6 0.6 L2.2 2.3 L3.8 0.6' stroke='#444' stroke-width='1.05' fill='none'/></svg>
<span class='t' style='top:152.62px;font-size:8.6px;color:#3a3a3a;left:553.40px;transform:scaleX(0.920);transform-origin:left;'>Data Range</span>
<div style='left:599.00px;top:157.80px;width:156.60px;height:1.20px;background:#c8c8c8;'></div>
<div style='left:758.5px;top:145.8px;width:14.7px;height:12.7px;background:#d9d9d9;border-radius:1px'></div>
<svg style='left:761px;top:147.5px' width='10' height='9' viewBox='0 0 10 9'>
<rect x='0.4' y='0.4' width='9.2' height='8.2' fill='#fff'/>
<rect x='0.4' y='0.4' width='9.2' height='2' fill='#b8cfe8'/><rect x='0.4' y='0.4' width='2.2' height='8.2' fill='#b8cfe8'/>
<path d='M0.4 0.4 H9.6 V8.6 H0.4 Z M0.4 2.4 H9.6 M0.4 4.5 H9.6 M0.4 6.6 H9.6 M2.6 0.4 V8.6 M4.9 0.4 V8.6 M7.2 0.4 V8.6' stroke='#4a4a5a' stroke-width='0.6' fill='none'/>
</svg>
<div style='left:554px;top:163.8px;width:6.2px;height:6.2px;border:0.8px solid #a4a4a4;background:#fff'></div>
<svg style='left:554.8px;top:164.60000000000002px' width='7' height='7'><path d='M1 3.6 L2.8 5.4 L6 1.2' stroke='#2a62b0' stroke-width='1' fill='none'/></svg>
<div style='left:666px;top:163.8px;width:6.2px;height:6.2px;border:0.8px solid #a4a4a4;background:#fff'></div>
<div style='left:554px;top:177.5px;width:6.2px;height:6.2px;border:0.8px solid #a4a4a4;background:#fff'></div>
<span class='t' style='top:167.62px;font-size:8.6px;color:#3a3a3a;left:566.70px;'>Titles row</span>
<span class='t' style='top:167.62px;font-size:8.6px;color:#3a3a3a;left:678.30px;'>Units row</span>
<span class='t' style='top:181.42px;font-size:8.6px;color:#3a3a3a;left:566.70px;transform:scaleX(0.974);transform-origin:left;'>Comments row</span>
<span class='t' style='top:167.82px;font-size:8.6px;color:#333;left:628.00px;'>1</span>
<div style='left:626.00px;top:172.20px;width:28.60px;height:0.70px;background:#c0c0c0;'></div>
<svg style='left:655.4px;top:162.8px' width='6' height='12'><path d='M0.8 3.6 L3 1.2 L5.2 3.6 M0.8 6.6 L3 9 L5.2 6.6' stroke='#777' stroke-width='0.8' fill='none'/></svg>
<span class='t' style='top:167.82px;font-size:8.6px;color:#9a9a9a;left:719.00px;'>1</span>
<div style='left:717.00px;top:172.20px;width:28.80px;height:0.70px;background:#dddddd;'></div>
<svg style='left:746.5999999999999px;top:162.8px' width='6' height='12'><path d='M0.8 3.6 L3 1.2 L5.2 3.6 M0.8 6.6 L3 9 L5.2 6.6' stroke='#bbb' stroke-width='0.8' fill='none'/></svg>
<span class='t' style='top:181.62px;font-size:8.6px;color:#9a9a9a;left:628.00px;'>1</span>
<div style='left:626.00px;top:186.00px;width:28.60px;height:0.70px;background:#dddddd;'></div>
<svg style='left:655.4px;top:176.6px' width='6' height='12'><path d='M0.8 3.6 L3 1.2 L5.2 3.6 M0.8 6.6 L3 9 L5.2 6.6' stroke='#bbb' stroke-width='0.8' fill='none'/></svg>
<div style='left:165.1px;top:204.2px;width:565.30px;height:285.30px;background:#fff;box-shadow:0 0 0 0.8px #b4b4b4'></div>
<div style='left:165.10px;top:204.20px;width:35.20px;height:33.60px;background:#f0f0f0;'></div>
<div style='left:200.30px;top:204.20px;width:530.10px;height:33.60px;background:#dcdcdc;'></div>
<div style='left:165.10px;top:237.80px;width:35.20px;height:243.80px;background:#dcdcdc;'></div>
<div style='left:200.30px;top:237.80px;width:522.50px;height:23.53px;background:#abd6df;'></div>
<div style='left:200.30px;top:261.33px;width:522.50px;height:220.27px;background:#e1e6fa;'></div>
<div style='left:165.10px;top:260.93px;width:557.70px;height:0.80px;background:#bfc2c8;'></div>
<div style='left:165.10px;top:284.46px;width:557.70px;height:0.80px;background:#bfc2c8;'></div>
<div style='left:165.10px;top:307.99px;width:557.70px;height:0.80px;background:#bfc2c8;'></div>
<div style='left:165.10px;top:331.52px;width:557.70px;height:0.80px;background:#bfc2c8;'></div>
<div style='left:165.10px;top:355.05px;width:557.70px;height:0.80px;background:#bfc2c8;'></div>
<div style='left:165.10px;top:378.58px;width:557.70px;height:0.80px;background:#bfc2c8;'></div>
<div style='left:165.10px;top:402.11px;width:557.70px;height:0.80px;background:#bfc2c8;'></div>
<div style='left:165.10px;top:425.64px;width:557.70px;height:0.80px;background:#bfc2c8;'></div>
<div style='left:165.10px;top:449.17px;width:557.70px;height:0.80px;background:#bfc2c8;'></div>
<div style='left:165.10px;top:472.70px;width:557.70px;height:0.80px;background:#bfc2c8;'></div>
<div style='left:165.10px;top:237.30px;width:565.20px;height:1.00px;background:#c4c4c4;'></div>
<div style='left:199.90px;top:204.20px;width:0.80px;height:277.40px;background:#c0c0c0;'></div>
<div style='left:278.45px;top:204.20px;width:0.80px;height:277.40px;background:#c0c0c0;'></div>
<div style='left:357.00px;top:204.20px;width:0.80px;height:277.40px;background:#c0c0c0;'></div>
<div style='left:435.55px;top:204.20px;width:0.80px;height:277.40px;background:#c0c0c0;'></div>
<div style='left:514.10px;top:204.20px;width:0.80px;height:277.40px;background:#c0c0c0;'></div>
<div style='left:592.65px;top:204.20px;width:0.80px;height:277.40px;background:#c0c0c0;'></div>
<div style='left:671.20px;top:204.20px;width:0.80px;height:277.40px;background:#c0c0c0;'></div>
<span class='t' style='top:215.44px;font-size:10px;color:#222;font-weight:bold;left:236.76px;transform:scaleX(0.940);transform-origin:center;'>A</span>
<span class='t' style='top:228.27px;font-size:10.2px;color:#222;font-weight:bold;left:228.18px;transform:scaleX(0.863);transform-origin:center;'>Case</span>
<span class='t' style='top:215.44px;font-size:10px;color:#222;font-weight:bold;left:315.31px;transform:scaleX(0.940);transform-origin:center;'>B</span>
<span class='t' style='top:228.27px;font-size:10.2px;color:#222;font-weight:bold;left:302.77px;transform:scaleX(0.863);transform-origin:center;'>USX12</span>
<span class='t' style='top:215.44px;font-size:10px;color:#222;font-weight:bold;left:393.86px;transform:scaleX(0.940);transform-origin:center;'>C</span>
<span class='t' style='top:228.27px;font-size:10.2px;color:#222;font-weight:bold;left:382.26px;transform:scaleX(0.863);transform-origin:center;'>LVY16</span>
<span class='t' style='top:215.44px;font-size:10px;color:#222;font-weight:bold;left:472.41px;transform:scaleX(0.940);transform-origin:center;'>D</span>
<span class='t' style='top:228.27px;font-size:10.2px;color:#222;font-weight:bold;left:460.71px;transform:scaleX(0.863);transform-origin:center;'>YPJ87</span>
<span class='t' style='top:215.44px;font-size:10px;color:#222;font-weight:bold;left:551.24px;transform:scaleX(0.940);transform-origin:center;'>E</span>
<span class='t' style='top:228.27px;font-size:10.2px;color:#222;font-weight:bold;left:538.13px;transform:scaleX(0.863);transform-origin:center;'>KCV53</span>
<span class='t' style='top:215.44px;font-size:10px;color:#222;font-weight:bold;left:630.07px;transform:scaleX(0.940);transform-origin:center;'>F</span>
<span class='t' style='top:228.27px;font-size:10.2px;color:#222;font-weight:bold;left:615.27px;transform:scaleX(0.863);transform-origin:center;'>DWR40</span>
<span class='t' style='top:215.44px;font-size:10px;color:#222;font-weight:bold;left:707.79px;transform:scaleX(0.940);transform-origin:center;'>G</span>
<span class='t' style='top:228.27px;font-size:10.2px;color:#222;font-weight:bold;left:695.80px;transform:scaleX(0.863);transform-origin:center;'>JND71</span>
<div style='left:722.80px;top:212.20px;width:7.50px;height:25.60px;background:#dcdcdc;'></div>
<div style='left:722.80px;top:228.30px;width:7.60px;height:253.30px;background:#ffffff;'></div>
<div style='left:723.2px;top:205.5px;width:6.8px;height:7px;background:#fff'></div>
<svg style='left:724px;top:206.5px' width='6' height='5'><path d='M0.8 3.6 L3 1.2 L5.2 3.6' stroke='#333' stroke-width='1' fill='none'/></svg>
<svg style='left:723.6px;top:475.6px' width='6' height='5'><path d='M0.8 1 L2.9 3.2 L5 1' stroke='#333' stroke-width='1.1' fill='none'/></svg>
<div style='left:165.10px;top:481.60px;width:565.20px;height:7.60px;background:#ffffff;'></div>
<div style='left:173.80px;top:481.60px;width:24.50px;height:7.60px;background:#dcdcdc;'></div>
<div style='left:722.60px;top:481.90px;width:7.80px;height:7.30px;background:#e6e6e6;'></div>
<svg style='left:716.6px;top:483px' width='5' height='6'><path d='M1.2 0.8 L3.4 3 L1.2 5.2' stroke='#333' stroke-width='1.1' fill='none'/></svg>
<svg style='left:166px;top:483px' width='6' height='6'><path d='M3.8 0.8 L1.4 3 L3.8 5.2' stroke='#222' stroke-width='1.1' fill='none'/></svg>
<span class='t' style='top:250.47px;font-size:10.2px;color:#222;font-weight:bold;left:168.20px;'>1</span>
<span class='t' style='top:274.00px;font-size:10.2px;color:#333;left:168.20px;'>2</span>
<span class='t' style='top:297.53px;font-size:10.2px;color:#333;left:168.20px;'>3</span>
<span class='t' style='top:321.06px;font-size:10.2px;color:#333;left:168.20px;'>4</span>
<span class='t' style='top:344.59px;font-size:10.2px;color:#333;left:168.20px;'>5</span>
<span class='t' style='top:368.12px;font-size:10.2px;color:#333;left:168.20px;'>6</span>
<span class='t' style='top:391.65px;font-size:10.2px;color:#333;left:168.20px;'>7</span>
<span class='t' style='top:415.18px;font-size:10.2px;color:#333;left:168.20px;'>8</span>
<span class='t' style='top:438.71px;font-size:10.2px;color:#333;left:168.20px;'>9</span>
<span class='t' style='top:462.24px;font-size:10.2px;color:#333;left:168.20px;'>10</span>
<span class='t' style='top:250.77px;font-size:10.2px;color:#555;left:214.00px;transform:scaleX(0.857);transform-origin:left;'>Case</span>
<div style='left:202.4px;top:245.2px;width:8.4px;height:8.7px;background:#9a5c48'></div>
<span class='t' style='top:249.64px;font-size:7.4px;color:#f2e6e0;font-weight:bold;left:204.34px;font-family:Liberation Serif,serif;'>T</span>
<span class='t' style='top:250.77px;font-size:10.2px;color:#555;left:281.25px;transform:scaleX(0.858);transform-origin:left;'>USX12</span>
<span class='t' style='top:250.77px;font-size:10.2px;color:#555;left:359.80px;transform:scaleX(0.858);transform-origin:left;'>LVY16</span>
<span class='t' style='top:250.77px;font-size:10.2px;color:#555;left:438.35px;transform:scaleX(0.858);transform-origin:left;'>YPJ87</span>
<span class='t' style='top:250.77px;font-size:10.2px;color:#555;left:516.90px;transform:scaleX(0.858);transform-origin:left;'>KCV53</span>
<span class='t' style='top:250.77px;font-size:10.2px;color:#555;left:595.45px;transform:scaleX(0.858);transform-origin:left;'>DWR40</span>
<span class='t' style='top:250.77px;font-size:10.2px;color:#555;left:674.00px;transform:scaleX(0.858);transform-origin:left;'>JND71</span>
<div style='left:278.35px;top:238.30px;width:1.00px;height:22.53px;background:#abd6df;'></div>
<div style='left:278.45px;top:238.30px;width:0;height:22.53px;border-left:0.8px dotted #a8b4c4'></div>
<span class='t' style='top:274.07px;font-size:10px;color:#1e1e1e;font-weight:bold;font-style:italic;left:270.89px;transform:scaleX(0.935);transform-origin:right;-webkit-text-stroke:0.15px #1e1e1e;'>1</span>
<span class='t' style='top:274.07px;font-size:10px;color:#1e1e1e;font-weight:bold;font-style:italic;left:327.20px;transform:scaleX(0.935);transform-origin:right;-webkit-text-stroke:0.15px #1e1e1e;'>38752</span>
<span class='t' style='top:274.07px;font-size:10px;color:#1e1e1e;font-weight:bold;font-style:italic;left:406.49px;transform:scaleX(0.961);transform-origin:right;-webkit-text-stroke:0.15px #1e1e1e;'>30811</span>
<span class='t' style='top:274.07px;font-size:10px;color:#1e1e1e;font-weight:bold;font-style:italic;left:489.86px;transform:scaleX(0.935);transform-origin:right;-webkit-text-stroke:0.15px #1e1e1e;'>6759</span>
<span class='t' style='top:274.07px;font-size:10px;color:#1e1e1e;font-weight:bold;font-style:italic;left:562.85px;transform:scaleX(0.935);transform-origin:right;-webkit-text-stroke:0.15px #1e1e1e;'>34425</span>
<span class='t' style='top:274.07px;font-size:10px;color:#1e1e1e;font-weight:bold;font-style:italic;left:641.40px;transform:scaleX(0.935);transform-origin:right;-webkit-text-stroke:0.15px #1e1e1e;'>52051</span>
<span class='t' style='top:297.60px;font-size:10px;color:#1e1e1e;font-weight:bold;font-style:italic;left:270.89px;transform:scaleX(0.935);transform-origin:right;-webkit-text-stroke:0.15px #1e1e1e;'>2</span>
<span class='t' style='top:297.60px;font-size:10px;color:#1e1e1e;font-weight:bold;font-style:italic;left:327.20px;transform:scaleX(0.935);transform-origin:right;-webkit-text-stroke:0.15px #1e1e1e;'>90134</span>
<span class='t' style='top:297.60px;font-size:10px;color:#1e1e1e;font-weight:bold;font-style:italic;left:405.75px;transform:scaleX(0.935);transform-origin:right;-webkit-text-stroke:0.15px #1e1e1e;'>98179</span>
<span class='t' style='top:297.60px;font-size:10px;color:#1e1e1e;font-weight:bold;font-style:italic;left:484.30px;transform:scaleX(0.935);transform-origin:right;-webkit-text-stroke:0.15px #1e1e1e;'>59336</span>
<span class='t' style='top:297.60px;font-size:10px;color:#1e1e1e;font-weight:bold;font-style:italic;left:562.85px;transform:scaleX(0.935);transform-origin:right;-webkit-text-stroke:0.15px #1e1e1e;'>12292</span>
<span class='t' style='top:297.60px;font-size:10px;color:#1e1e1e;font-weight:bold;font-style:italic;left:641.40px;transform:scaleX(0.935);transform-origin:right;-webkit-text-stroke:0.15px #1e1e1e;'>85073</span>
<span class='t' style='top:321.12px;font-size:10px;color:#1e1e1e;font-weight:bold;font-style:italic;left:270.89px;transform:scaleX(0.935);transform-origin:right;-webkit-text-stroke:0.15px #1e1e1e;'>3</span>
<span class='t' style='top:321.12px;font-size:10px;color:#1e1e1e;font-weight:bold;font-style:italic;left:327.20px;transform:scaleX(0.935);transform-origin:right;-webkit-text-stroke:0.15px #1e1e1e;'>14131</span>
<span class='t' style='top:321.12px;font-size:10px;color:#1e1e1e;font-weight:bold;font-style:italic;left:405.75px;transform:scaleX(0.935);transform-origin:right;-webkit-text-stroke:0.15px #1e1e1e;'>20078</span>
<span class='t' style='top:321.12px;font-size:10px;color:#1e1e1e;font-weight:bold;font-style:italic;left:484.30px;transform:scaleX(0.935);transform-origin:right;-webkit-text-stroke:0.15px #1e1e1e;'>16615</span>
<span class='t' style='top:321.12px;font-size:10px;color:#1e1e1e;font-weight:bold;font-style:italic;left:562.85px;transform:scaleX(0.935);transform-origin:right;-webkit-text-stroke:0.15px #1e1e1e;'>78530</span>
<span class='t' style='top:321.12px;font-size:10px;color:#1e1e1e;font-weight:bold;font-style:italic;left:641.40px;transform:scaleX(0.935);transform-origin:right;-webkit-text-stroke:0.15px #1e1e1e;'>92207</span>
<span class='t' style='top:344.66px;font-size:10px;color:#1e1e1e;font-weight:bold;font-style:italic;left:270.89px;transform:scaleX(0.935);transform-origin:right;-webkit-text-stroke:0.15px #1e1e1e;'>4</span>
<span class='t' style='top:344.66px;font-size:10px;color:#1e1e1e;font-weight:bold;font-style:italic;left:327.20px;transform:scaleX(0.935);transform-origin:right;-webkit-text-stroke:0.15px #1e1e1e;'>85038</span>
<span class='t' style='top:344.66px;font-size:10px;color:#1e1e1e;font-weight:bold;font-style:italic;left:405.75px;transform:scaleX(0.935);transform-origin:right;-webkit-text-stroke:0.15px #1e1e1e;'>48010</span>
<span class='t' style='top:344.66px;font-size:10px;color:#1e1e1e;font-weight:bold;font-style:italic;left:484.30px;transform:scaleX(0.935);transform-origin:right;-webkit-text-stroke:0.15px #1e1e1e;'>82569</span>
<span class='t' style='top:344.66px;font-size:10px;color:#1e1e1e;font-weight:bold;font-style:italic;left:562.85px;transform:scaleX(0.935);transform-origin:right;-webkit-text-stroke:0.15px #1e1e1e;'>72663</span>
<span class='t' style='top:344.66px;font-size:10px;color:#1e1e1e;font-weight:bold;font-style:italic;left:641.40px;transform:scaleX(0.935);transform-origin:right;-webkit-text-stroke:0.15px #1e1e1e;'>25495</span>
<span class='t' style='top:368.19px;font-size:10px;color:#1e1e1e;font-weight:bold;font-style:italic;left:270.89px;transform:scaleX(0.935);transform-origin:right;-webkit-text-stroke:0.15px #1e1e1e;'>5</span>
<span class='t' style='top:368.19px;font-size:10px;color:#1e1e1e;font-weight:bold;font-style:italic;left:327.20px;transform:scaleX(0.935);transform-origin:right;-webkit-text-stroke:0.15px #1e1e1e;'>71616</span>
<span class='t' style='top:368.19px;font-size:10px;color:#1e1e1e;font-weight:bold;font-style:italic;left:405.75px;transform:scaleX(0.935);transform-origin:right;-webkit-text-stroke:0.15px #1e1e1e;'>28482</span>
<span class='t' style='top:368.19px;font-size:10px;color:#1e1e1e;font-weight:bold;font-style:italic;left:484.30px;transform:scaleX(0.935);transform-origin:right;-webkit-text-stroke:0.15px #1e1e1e;'>83002</span>
<span class='t' style='top:368.19px;font-size:10px;color:#1e1e1e;font-weight:bold;font-style:italic;left:562.85px;transform:scaleX(0.935);transform-origin:right;-webkit-text-stroke:0.15px #1e1e1e;'>60082</span>
<span class='t' style='top:368.19px;font-size:10px;color:#1e1e1e;font-weight:bold;font-style:italic;left:641.40px;transform:scaleX(0.935);transform-origin:right;-webkit-text-stroke:0.15px #1e1e1e;'>48049</span>
<span class='t' style='top:391.72px;font-size:10px;color:#1e1e1e;font-weight:bold;font-style:italic;left:270.89px;transform:scaleX(0.935);transform-origin:right;-webkit-text-stroke:0.15px #1e1e1e;'>6</span>
<span class='t' style='top:391.72px;font-size:10px;color:#1e1e1e;font-weight:bold;font-style:italic;left:327.20px;transform:scaleX(0.935);transform-origin:right;-webkit-text-stroke:0.15px #1e1e1e;'>21775</span>
<span class='t' style='top:391.72px;font-size:10px;color:#1e1e1e;font-weight:bold;font-style:italic;left:405.75px;transform:scaleX(0.935);transform-origin:right;-webkit-text-stroke:0.15px #1e1e1e;'>97856</span>
<span class='t' style='top:391.72px;font-size:10px;color:#1e1e1e;font-weight:bold;font-style:italic;left:484.30px;transform:scaleX(0.935);transform-origin:right;-webkit-text-stroke:0.15px #1e1e1e;'>94049</span>
<span class='t' style='top:391.72px;font-size:10px;color:#1e1e1e;font-weight:bold;font-style:italic;left:562.85px;transform:scaleX(0.935);transform-origin:right;-webkit-text-stroke:0.15px #1e1e1e;'>40552</span>
<span class='t' style='top:391.72px;font-size:10px;color:#1e1e1e;font-weight:bold;font-style:italic;left:641.40px;transform:scaleX(0.935);transform-origin:right;-webkit-text-stroke:0.15px #1e1e1e;'>53643</span>
<span class='t' style='top:415.25px;font-size:10px;color:#1e1e1e;font-weight:bold;font-style:italic;left:270.89px;transform:scaleX(0.935);transform-origin:right;-webkit-text-stroke:0.15px #1e1e1e;'>7</span>
<span class='t' style='top:415.25px;font-size:10px;color:#1e1e1e;font-weight:bold;font-style:italic;left:327.20px;transform:scaleX(0.935);transform-origin:right;-webkit-text-stroke:0.15px #1e1e1e;'>39993</span>
<span class='t' style='top:415.25px;font-size:10px;color:#1e1e1e;font-weight:bold;font-style:italic;left:411.31px;transform:scaleX(0.935);transform-origin:right;-webkit-text-stroke:0.15px #1e1e1e;'>9613</span>
<span class='t' style='top:415.25px;font-size:10px;color:#1e1e1e;font-weight:bold;font-style:italic;left:484.30px;transform:scaleX(0.935);transform-origin:right;-webkit-text-stroke:0.15px #1e1e1e;'>34230</span>
<span class='t' style='top:415.25px;font-size:10px;color:#1e1e1e;font-weight:bold;font-style:italic;left:562.85px;transform:scaleX(0.935);transform-origin:right;-webkit-text-stroke:0.15px #1e1e1e;'>37683</span>
<span class='t' style='top:415.25px;font-size:10px;color:#1e1e1e;font-weight:bold;font-style:italic;left:641.40px;transform:scaleX(0.935);transform-origin:right;-webkit-text-stroke:0.15px #1e1e1e;'>66558</span>
<span class='t' style='top:438.78px;font-size:10px;color:#1e1e1e;font-weight:bold;font-style:italic;left:270.89px;transform:scaleX(0.935);transform-origin:right;-webkit-text-stroke:0.15px #1e1e1e;'>8</span>
<span class='t' style='top:438.78px;font-size:10px;color:#1e1e1e;font-weight:bold;font-style:italic;left:327.20px;transform:scaleX(0.935);transform-origin:right;-webkit-text-stroke:0.15px #1e1e1e;'>73884</span>
<span class='t' style='top:438.78px;font-size:10px;color:#1e1e1e;font-weight:bold;font-style:italic;left:405.75px;transform:scaleX(0.935);transform-origin:right;-webkit-text-stroke:0.15px #1e1e1e;'>25238</span>
<span class='t' style='top:438.78px;font-size:10px;color:#1e1e1e;font-weight:bold;font-style:italic;left:484.30px;transform:scaleX(0.935);transform-origin:right;-webkit-text-stroke:0.15px #1e1e1e;'>70364</span>
<span class='t' style='top:438.78px;font-size:10px;color:#1e1e1e;font-weight:bold;font-style:italic;left:562.85px;transform:scaleX(0.935);transform-origin:right;-webkit-text-stroke:0.15px #1e1e1e;'>76282</span>
<span class='t' style='top:438.78px;font-size:10px;color:#1e1e1e;font-weight:bold;font-style:italic;left:641.40px;transform:scaleX(0.935);transform-origin:right;-webkit-text-stroke:0.15px #1e1e1e;'>58536</span>
<span class='t' style='top:462.31px;font-size:10px;color:#1e1e1e;font-weight:bold;font-style:italic;left:270.89px;transform:scaleX(0.935);transform-origin:right;-webkit-text-stroke:0.15px #1e1e1e;'>9</span>
<span class='t' style='top:462.31px;font-size:10px;color:#1e1e1e;font-weight:bold;font-style:italic;left:327.20px;transform:scaleX(0.935);transform-origin:right;-webkit-text-stroke:0.15px #1e1e1e;'>93066</span>
<span class='t' style='top:462.31px;font-size:10px;color:#1e1e1e;font-weight:bold;font-style:italic;left:405.75px;transform:scaleX(0.935);transform-origin:right;-webkit-text-stroke:0.15px #1e1e1e;'>67743</span>
<span class='t' style='top:462.31px;font-size:10px;color:#1e1e1e;font-weight:bold;font-style:italic;left:484.30px;transform:scaleX(0.935);transform-origin:right;-webkit-text-stroke:0.15px #1e1e1e;'>96856</span>
<span class='t' style='top:462.31px;font-size:10px;color:#1e1e1e;font-weight:bold;font-style:italic;left:562.85px;transform:scaleX(0.935);transform-origin:right;-webkit-text-stroke:0.15px #1e1e1e;'>13588</span>
<span class='t' style='top:462.31px;font-size:10px;color:#1e1e1e;font-weight:bold;font-style:italic;left:641.40px;transform:scaleX(0.935);transform-origin:right;-webkit-text-stroke:0.15px #1e1e1e;'>14150</span>
<div style='left:721.50px;top:272.33px;width:1.10px;height:1.50px;background:#e0b070;'></div>
<div style='left:721.50px;top:295.86px;width:1.10px;height:1.50px;background:#e0b070;'></div>
<div style='left:721.50px;top:319.39px;width:1.10px;height:1.50px;background:#e0b070;'></div>
<div style='left:721.50px;top:342.92px;width:1.10px;height:1.50px;background:#e0b070;'></div>
<div style='left:721.50px;top:366.45px;width:1.10px;height:1.50px;background:#e0b070;'></div>
<div style='left:721.50px;top:389.98px;width:1.10px;height:1.50px;background:#e0b070;'></div>
<div style='left:721.50px;top:413.51px;width:1.10px;height:1.50px;background:#e0b070;'></div>
<div style='left:721.50px;top:437.04px;width:1.10px;height:1.50px;background:#e0b070;'></div>
<div style='left:165.00px;top:489.70px;width:36.20px;height:14.00px;background:#dcdcdc;'></div>
<div style='left:201.20px;top:489.70px;width:36.70px;height:14.00px;background:#ffffff;'></div>
<span class='t' style='top:498.02px;font-size:8.6px;color:#333;left:170.70px;transform:scaleX(0.892);transform-origin:left;'>Sheet1</span>
<span class='t' style='top:498.02px;font-size:8.6px;color:#333;left:207.30px;transform:scaleX(0.928);transform-origin:left;'>Sheet2</span>
<div style='left:194px;top:257px;width:142.7px;height:205.39999999999998px;background:#fff;box-shadow:1.5px 1.5px 1.6px rgba(0,0,0,0.33),0 0 0 0.6px #c8c8c8'></div>
<div style='left:194.00px;top:339.40px;width:142.70px;height:19.90px;background:#add6df;'></div>
<div style='left:199.00px;top:318.10px;width:132.40px;height:0.80px;background:#e2e2e2;'></div>
<div style='left:199.00px;top:400.20px;width:132.40px;height:0.80px;background:#e2e2e2;'></div>
<span class='t' style='top:268.48px;font-size:9.3px;color:#333;left:216.10px;'>Copy data</span>
<span class='t' style='top:268.48px;font-size:9.3px;color:#333;left:299.00px;'>Ctrl+C</span>
<span class='t' style='top:288.68px;font-size:9.3px;color:#333;left:216.10px;transform:scaleX(0.967);transform-origin:left;'>Paste data</span>
<span class='t' style='top:288.68px;font-size:9.3px;color:#333;left:299.00px;transform:scaleX(1.019);transform-origin:left;'>Ctrl+V</span>
<span class='t' style='top:308.98px;font-size:9.3px;color:#333;left:216.10px;transform:scaleX(0.937);transform-origin:left;'>Clear data</span>
<span class='t' style='top:308.98px;font-size:9.3px;color:#333;left:299.00px;transform:scaleX(0.946);transform-origin:left;'>Del</span>
<span class='t' style='top:329.48px;font-size:9.3px;color:#333;left:216.10px;transform:scaleX(0.985);transform-origin:left;'>Set as &quot;Data range&quot;</span>
<span class='t' style='top:350.18px;font-size:9.3px;color:#333;left:216.10px;transform:scaleX(0.984);transform-origin:left;'>Set as &quot;Titles row&quot;</span>
<span class='t' style='top:370.68px;font-size:9.3px;color:#333;left:216.10px;transform:scaleX(0.980);transform-origin:left;'>Set as &quot;Units row&quot;</span>
<span class='t' style='top:391.18px;font-size:9.3px;color:#333;left:216.10px;'>Set as &quot;Comments row&quot;</span>
<span class='t' style='top:412.08px;font-size:9.3px;color:#333;left:216.10px;transform:scaleX(1.011);transform-origin:left;'>Insert row above</span>
<span class='t' style='top:432.48px;font-size:9.3px;color:#333;left:216.10px;transform:scaleX(1.019);transform-origin:left;'>Insert row below</span>
<span class='t' style='top:452.78px;font-size:9.3px;color:#333;left:216.10px;transform:scaleX(0.979);transform-origin:left;'>Remove row(s)</span>
<svg style='left:198px;top:262px' width='12' height='10' viewBox='0 0 12 10'>
<path d='M1.6 1.2 H5.8 V7.6 H1.6 Z' fill='#fff' stroke='#8a8a8a' stroke-width='0.9'/>
<path d='M4 3 H7.6 L9.8 5.2 V8.8 H4 Z' fill='#fff' stroke='#8a8a8a' stroke-width='0.9'/>
<path d='M7.4 3 V5.4 H9.8' fill='none' stroke='#8a8a8a' stroke-width='0.7'/>
</svg>
<svg style='left:198px;top:282px' width='12' height='10' viewBox='0 0 12 10'>
<path d='M1.6 1.8 H6.4 V8.8 H1.6 Z' fill='#fff' stroke='#8a8a8a' stroke-width='0.9'/>
<rect x='2.8' y='0.7' width='2.4' height='1.4' fill='#8a8a8a'/>
<path d='M4.4 4 H7.6 L9.8 6 V8.8 H4.4 Z' fill='#fff' stroke='#8a8a8a' stroke-width='0.9'/>
</svg>
<svg style='left:198px;top:302px' width='12' height='10' viewBox='0 0 12 10'>
<path d='M1.4 1.6 H8.6' stroke='#8a8a8a' stroke-width='0.8'/><rect x='3.6' y='0.4' width='2' height='1' fill='#8a8a8a'/>
<path d='M2.2 2.2 V8.9 H7.8 V2.2' fill='#f4f4f4' stroke='#8a8a8a' stroke-width='0.9'/>
<path d='M4 3.6 V7.8 M6 3.6 V7.8' stroke='#a0a0a0' stroke-width='0.7'/>
</svg>
<svg style='left:199.2px;top:324px' width='8.8' height='9.2' viewBox='0 0 10 10' preserveAspectRatio='none'><g stroke='#7a7a7a' stroke-width='0.8' fill='#fff'><rect x='0.5' y='0.5' width='8.8' height='8.8'/></g><rect x='4.9' y='0.5' width='4.4' height='6.6' fill='#9cc0e6'/><path d='M0.5 2.7 H9.3 M0.5 4.9 H9.3 M0.5 7.1 H9.3 M2.7 0.5 V9.3 M4.9 0.5 V9.3 M7.1 0.5 V9.3' stroke='#7a7a7a' stroke-width='0.6'/></svg>
<svg style='left:199.2px;top:406.2px' width='8.8' height='9.2' viewBox='0 0 10 10' preserveAspectRatio='none'><g stroke='#7a7a7a' stroke-width='0.8' fill='#fff'><rect x='0.5' y='0.5' width='8.8' height='8.8'/></g><rect x='0.5' y='0.5' width='8.8' height='2.2' fill='#c85050'/><path d='M0.5 2.7 H9.3 M0.5 4.9 H9.3 M0.5 7.1 H9.3 M2.7 0.5 V9.3 M4.9 0.5 V9.3 M7.1 0.5 V9.3' stroke='#7a7a7a' stroke-width='0.6'/><rect x='5.5' y='0.5' width='3.8' height='2.2' fill='#3a9040'/></svg>
<svg style='left:199.2px;top:426.6px' width='8.8' height='9.2' viewBox='0 0 10 10' preserveAspectRatio='none'><g stroke='#7a7a7a' stroke-width='0.8' fill='#fff'><rect x='0.5' y='0.5' width='8.8' height='8.8'/></g><path d='M0.5 2.7 H9.3 M0.5 4.9 H9.3 M0.5 7.1 H9.3 M2.7 0.5 V9.3 M4.9 0.5 V9.3 M7.1 0.5 V9.3' stroke='#7a7a7a' stroke-width='0.6'/><rect x='0.5' y='7.1' width='3' height='2.2' fill='#e0a030'/><rect x='5' y='7.1' width='4.3' height='2.2' fill='#3a9040'/></svg>
<div style='left:734.20px;top:204.20px;width:13.80px;height:14.00px;background:#cce4f7;border-radius:0.5px'></div>
<div style='left:734.80px;top:219.00px;width:282.20px;height:285.60px;background:#ffffff;'></div>
<svg style='left:730px;top:198px' width='140' height='25' viewBox='0 0 140 25'>
<path d='M6.6 8.2 L14 11.6 L10.8 12.6 L14.6 16.4 L13.4 17.6 L9.6 13.8 L8.4 16.8 Z' fill='#fff' stroke='#7a7a7a' stroke-width='0.85' stroke-linejoin='round'/>
<g fill='none' stroke='#8c8c8c' stroke-width='1.0'>
<circle cx='26.2' cy='12.2' r='3.3'/><path d='M23.8 14.6 L21 17.4' stroke-width='1.5'/>
<circle cx='40.2' cy='12' r='3.3'/><path d='M37.8 14.4 L35 17.2' stroke-width='1.5'/>
<circle cx='54.2' cy='12' r='3.3'/><path d='M51.8 14.4 L49 17.2' stroke-width='1.5'/>
</g>
<g stroke='#9a9a9a' stroke-width='0.7' fill='none'><path d='M25 10.5 V14 M27.4 10.5 V14 M23.6 12.2 H28.8 M38.8 12 H41.6 M40.2 10.6 V13.4 M52.8 12 H55.6 M54.2 10.2 V12 L55.4 13'/></g>
<path d='M63.3 7.5 V18' stroke='#d6d6d6' stroke-width='0.9'/>
<g stroke='#8c8c8c' stroke-width='0.85' fill='none'>
<path d='M71.7 8.6 V17.2'/>
<path d='M86.1 8.6 V17.2 M82.2 12.9 H90'/>
<path d='M98.5 8.6 V17.2 M102.7 8.6 V17.2 M96.6 12.9 H104.6'/>
<path d='M112.5 8.6 V17.2 M111 12.9 H113.2'/><path d='M114.4 10.3 L118.2 12.9 L114.4 15.5 Z'/>
<path d='M61.2 0' />
</g>
<g fill='#8c8c8c'><circle cx='71.7' cy='12.9' r='1'/><circle cx='98.5' cy='12.9' r='1'/><circle cx='102.7' cy='12.9' r='1'/></g>
<g fill='none' stroke='#7a7a7a' stroke-width='1.0'>
<path d='M131.6 9.6 A4.2 4.2 0 0 1 128.4 17'/><path d='M125 15.8 A4.2 4.2 0 0 1 128.2 8.6'/>
</g>
<path d='M126.6 6.8 L130 8.4 L127 10.6 Z' fill='#555'/><path d='M129.8 18.8 L126.4 17.2 L129.4 15 Z' fill='#555'/>
</svg>
<div style='left:164.6px;top:510.2px;width:36.8px;height:14.9px;background:#e1e1e1;border:0.8px solid #c8c8c8'></div>
<span class='t' style='top:518.82px;font-size:8.6px;color:#333;left:175.00px;transform:scaleX(0.939);transform-origin:left;'>Help</span>
<div style='left:920.3px;top:510.2px;width:52.6px;height:14.9px;background:#e1e1e1;border:0.8px solid #c8c8c8'></div>
<svg style='left:922.5px;top:511.5px' width='12' height='12' viewBox='0 0 12 12'>
<path d='M0.8 0.8 H9.5 L11.2 2.5 V11.2 H0.8 Z' fill='#f4f4f4' stroke='#666' stroke-width='0.8'/>
<rect x='2.6' y='0.8' width='5.6' height='3.4' fill='#fff' stroke='#666' stroke-width='0.7'/>
<rect x='2.2' y='6' width='7.6' height='5.2' fill='#fff' stroke='#666' stroke-width='0.7'/>
<path d='M3.4 7.8 H8.6 M3.4 9.4 H8.6' stroke='#888' stroke-width='0.6'/>
</svg>
<span class='t' style='top:518.82px;font-size:8.6px;color:#333;left:936.00px;transform:scaleX(0.941);transform-origin:left;'>Save as...</span>
<div style='left:979.0px;top:510.2px;width:37.1px;height:14.9px;background:#e1e1e1;border:0.8px solid #c8c8c8'></div>
<span class='t' style='top:518.75px;font-size:8.8px;color:#333;left:988.40px;transform:scaleX(0.889);transform-origin:left;'>Close</span></body></html>
